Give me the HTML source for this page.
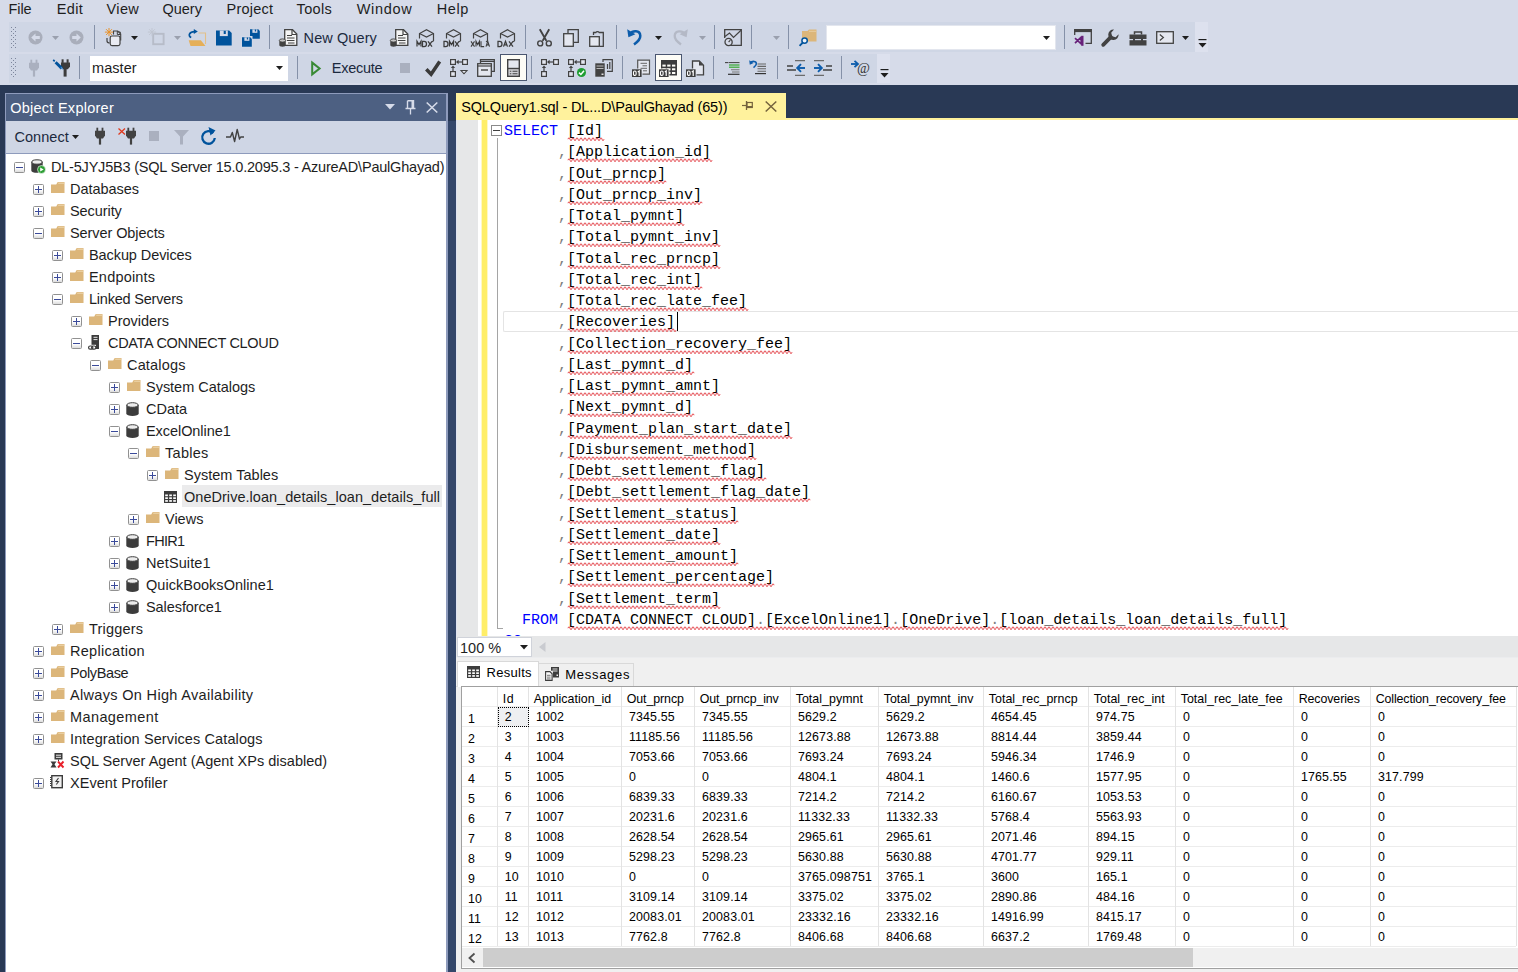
<!DOCTYPE html><html><head><meta charset="utf-8"><title>SSMS</title><style>
*{box-sizing:border-box;margin:0;padding:0}
html,body{width:1518px;height:972px;overflow:hidden}
body{background:#293955;font-family:"Liberation Sans",sans-serif;position:relative;color:#000}
.abs{position:absolute}
.t{position:absolute;white-space:pre;line-height:1}
#top{position:absolute;left:0;top:0;width:1518px;height:85px;background:#d6dbe9}
.menu{font-size:14.5px;color:#1e1e1e;top:2px}
svg{position:absolute;overflow:visible}
.tb{position:absolute;background:#cfd6e5}
.sep{position:absolute;width:1px;background:#8591a8}
#oe{position:absolute;left:5px;top:93px;width:443px;height:879px;background:#fff}
#oet{position:absolute;left:0;top:0;width:443px;height:28px;background:#4d6082}
#oetb{position:absolute;left:0;top:28px;width:443px;height:32px;background:#cfd6e5}
.tr{font-size:14.5px;color:#1e1e1e}
#ed{position:absolute;left:456px;top:120px;width:1062px;height:516px;background:#fff;overflow:hidden}
.code{font-family:"Liberation Mono",monospace;font-size:15px;color:#000;line-height:1}
.kw{color:#0000ff}
.gr{color:#808080}
#res{position:absolute;left:456px;top:636px;width:1062px;height:336px;background:#f0f0f0}
.g{font-size:12.4px;color:#000}
.hl{position:absolute;height:1px;background:#ececec}
.vl{position:absolute;width:1px;background:#e3e3e3}
</style></head><body>
<div id="top">
<span class="t menu" style="left:8.5px;letter-spacing:-0.079px">File</span>
<span class="t menu" style="left:56.7px;letter-spacing:0.371px">Edit</span>
<span class="t menu" style="left:106.5px;letter-spacing:0.379px">View</span>
<span class="t menu" style="left:162.39999999999998px;letter-spacing:0.022px">Query</span>
<span class="t menu" style="left:226.5px;letter-spacing:0.225px">Project</span>
<span class="t menu" style="left:296.59999999999997px;letter-spacing:0.342px">Tools</span>
<span class="t menu" style="left:356.7px;letter-spacing:0.677px">Window</span>
<span class="t menu" style="left:436.8px;letter-spacing:0.592px">Help</span>
<div class="tb" style="left:9px;top:22px;width:1186px;height:30px"></div>
<div class="tb" style="left:1195px;top:22px;width:13px;height:30px;background:#dde1ee"></div>
<div class="tb" style="left:9px;top:54px;width:868px;height:29px"></div>
<div class="tb" style="left:877px;top:54px;width:13px;height:29px;background:#dde1ee"></div>
<svg style="left:11px;top:27px" width="6" height="22" viewBox="0 0 6 22" ><rect x="0" y="0" width="1" height="1" fill="#7d869c"/><rect x="4" y="0" width="1" height="1" fill="#7d869c"/><rect x="2" y="2" width="1" height="1" fill="#7d869c"/><rect x="0" y="4" width="1" height="1" fill="#7d869c"/><rect x="4" y="4" width="1" height="1" fill="#7d869c"/><rect x="2" y="6" width="1" height="1" fill="#7d869c"/><rect x="0" y="8" width="1" height="1" fill="#7d869c"/><rect x="4" y="8" width="1" height="1" fill="#7d869c"/><rect x="2" y="10" width="1" height="1" fill="#7d869c"/><rect x="0" y="12" width="1" height="1" fill="#7d869c"/><rect x="4" y="12" width="1" height="1" fill="#7d869c"/><rect x="2" y="14" width="1" height="1" fill="#7d869c"/><rect x="0" y="16" width="1" height="1" fill="#7d869c"/><rect x="4" y="16" width="1" height="1" fill="#7d869c"/><rect x="2" y="18" width="1" height="1" fill="#7d869c"/><rect x="0" y="20" width="1" height="1" fill="#7d869c"/><rect x="4" y="20" width="1" height="1" fill="#7d869c"/></svg>
<svg style="left:11px;top:58px" width="6" height="20" viewBox="0 0 6 20" ><rect x="0" y="0" width="1" height="1" fill="#7d869c"/><rect x="4" y="0" width="1" height="1" fill="#7d869c"/><rect x="2" y="2" width="1" height="1" fill="#7d869c"/><rect x="0" y="4" width="1" height="1" fill="#7d869c"/><rect x="4" y="4" width="1" height="1" fill="#7d869c"/><rect x="2" y="6" width="1" height="1" fill="#7d869c"/><rect x="0" y="8" width="1" height="1" fill="#7d869c"/><rect x="4" y="8" width="1" height="1" fill="#7d869c"/><rect x="2" y="10" width="1" height="1" fill="#7d869c"/><rect x="0" y="12" width="1" height="1" fill="#7d869c"/><rect x="4" y="12" width="1" height="1" fill="#7d869c"/><rect x="2" y="14" width="1" height="1" fill="#7d869c"/><rect x="0" y="16" width="1" height="1" fill="#7d869c"/><rect x="4" y="16" width="1" height="1" fill="#7d869c"/><rect x="2" y="18" width="1" height="1" fill="#7d869c"/></svg>
<svg style="left:28px;top:30px" width="15" height="15" viewBox="0 0 15 15" ><circle cx="7.5" cy="7.5" r="7" fill="#a9aebb"/><path d="M3.2 7.5L7.5 3.4v2.6h4.3v3H7.5v2.6z" fill="#d6dbe9"/></svg>
<svg style="left:52px;top:36px" width="7" height="5" viewBox="0 0 7 5" ><path d="M0 0h7l-3.5 4z" fill="#9aa0ae"/></svg>
<svg style="left:69px;top:30px" width="15" height="15" viewBox="0 0 15 15" ><circle cx="7.5" cy="7.5" r="7" fill="#a9aebb"/><path d="M11.8 7.5L7.5 3.4v2.6H3.2v3h4.3v2.6z" fill="#d6dbe9"/></svg>
<div class="sep" style="left:94px;top:25px;height:24px"></div>
<svg style="left:105px;top:28px" width="17" height="19" viewBox="0 0 17 19" ><path d="M8.500 6.500V3h4.200l3 3v6.500" fill="none" stroke="#424242" stroke-width="1.100"/><path d="M12.300 3v3.500h3.400" fill="none" stroke="#424242" stroke-width="1"/><path d="M12.800 2.800l3 3V4z" fill="#424242"/><rect x="5.200" y="8" width="9.800" height="9.600" rx="1.800" fill="#e9ebf2" stroke="#424242" stroke-width="1.200"/><path d="M2 10v2.800a2 2 0 0 0 2 2h0.500" fill="none" stroke="#424242" stroke-width="1.200"/><g stroke="#e8922a" stroke-width="1"><path d="M4 0v8.200M-0.100 4.100h8.200M1.100 1.200l5.800 5.800M6.900 1.200L1.100 7"/></g></svg>
<svg style="left:131px;top:36px" width="7" height="5" viewBox="0 0 7 5" ><path d="M0 0h7l-3.5 4z" fill="#1e1e1e"/></svg>
<svg style="left:148px;top:28px" width="18" height="19" viewBox="0 0 18 19" ><rect x="5.200" y="5.800" width="10.400" height="10.400" fill="none" stroke="#b7bcc8" stroke-width="1.900"/><g stroke="#c0c5d0" stroke-width="0.900"><path d="M4 0v8.200M-0.100 4.100h8.200M1.100 1.200l5.800 5.800M6.900 1.200L1.100 7"/></g></svg>
<svg style="left:174px;top:36px" width="7" height="5" viewBox="0 0 7 5" ><path d="M0 0h7l-3.5 4z" fill="#9aa0ae"/></svg>
<svg style="left:188px;top:29px" width="19" height="18" viewBox="0 0 19 18" ><path d="M10.500 4h7v11" fill="none" stroke="#e2c089" stroke-width="1.100"/><path d="M0.700 11.200h12.100l4.700 5.800h-15z" fill="#e5af58"/><path d="M3.200 8.600C-0.500 6.800 1.500 2.600 6.500 2.600" fill="none" stroke="#00539c" stroke-width="1.700"/><path d="M5.800 0L9.800 2.500 5.800 5.100z" fill="#00539c"/></svg>
<svg style="left:216px;top:30px" width="16" height="16" viewBox="0 0 16 16" ><g transform="scale(1.0)"><path d="M0 0.500h13.200L15.700 3v12.500H0z" fill="#00539c"/><rect x="3.800" y="0.500" width="8" height="5.600" fill="#d3d9e8"/><rect x="7.700" y="0.800" width="2.100" height="3.200" fill="#00539c"/></g></svg>
<svg style="left:250px;top:29px" width="10" height="10" viewBox="0 0 10 10" ><g transform="scale(0.625)"><path d="M0 0.500h13.200L15.700 3v12.500H0z" fill="#00539c"/><rect x="3.800" y="0.500" width="8" height="5.600" fill="#d3d9e8"/><rect x="7.700" y="0.800" width="2.100" height="3.200" fill="#00539c"/></g></svg><svg style="left:241px;top:35.8px" width="11.5" height="11.5" viewBox="0 0 11.5 11.5" ><rect width="11.500" height="11.500" fill="#d3d9e8"/></svg><svg style="left:242px;top:36.8px" width="10" height="10" viewBox="0 0 10 10" ><g transform="scale(0.625)"><path d="M0 0.500h13.200L15.700 3v12.500H0z" fill="#00539c"/><rect x="3.800" y="0.500" width="8" height="5.600" fill="#d3d9e8"/><rect x="7.700" y="0.800" width="2.100" height="3.200" fill="#00539c"/></g></svg>
<div class="sep" style="left:269px;top:25px;height:24px"></div>
<svg style="left:279px;top:29px" width="19" height="18" viewBox="0 0 19 18" ><path d="M5.7 0.7h7.8l4.3 4.3v11.3H5.7z" fill="#f5f5f5" stroke="#424242" stroke-width="1.3"/><path d="M13 0.7v4.8h4.8" fill="none" stroke="#424242" stroke-width="1.2"/><path d="M8 6.5h5M8 9h7.5M8 11.5h7.5M9 14h6.5" stroke="#424242" stroke-width="1.2"/><path d="M0.3 11.5h6.4v4.6a3.2 1.7 0 0 1-6.4 0z" fill="#424242"/><ellipse cx="3.5" cy="11.5" rx="3.2" ry="1.6" fill="#c8c8c8" stroke="#424242" stroke-width="0.9"/></svg>
<span class="t" style="left:303.6px;top:31px;font-size:14.5px;color:#1b293e;letter-spacing:0.09px">New Query</span>
<svg style="left:390px;top:29px" width="19" height="18" viewBox="0 0 19 18" ><path d="M5.7 0.7h7.8l4.3 4.3v11.3H5.7z" fill="#f5f5f5" stroke="#424242" stroke-width="1.3"/><path d="M13 0.7v4.8h4.8" fill="none" stroke="#424242" stroke-width="1.2"/><path d="M8 6.5h5M8 9h7.5M8 11.5h7.5M9 14h6.5" stroke="#424242" stroke-width="1.2"/><path d="M0.3 11.5h6.4v4.6a3.2 1.7 0 0 1-6.4 0z" fill="#424242"/><ellipse cx="3.5" cy="11.5" rx="3.2" ry="1.6" fill="#c8c8c8" stroke="#424242" stroke-width="0.9"/></svg>
<svg style="left:417px;top:29px" width="19" height="18" viewBox="0 0 19 18" ><path d="M2.500 9.500v-5L9.500 0.800l7 3.700v7.500" fill="none" stroke="#424242" stroke-width="1.200"/><path d="M2.500 4.500l7 3.600 7-3.600" fill="none" stroke="#424242" stroke-width="1.200"/><path d="M16.500 12l-1.500 0.800" stroke="#424242" stroke-width="1.200"/><path transform="translate(0.00 12.300) scale(1.0 1)" d="M0 5.300V0L2 3.200 4 0V5.300" fill="none" stroke="#3c3c3c" stroke-width="1.250" stroke-linejoin="miter"/><path transform="translate(5.50 12.300) scale(1.0 1)" d="M0 0V5.300H1.600Q4 5.300 4 2.650Q4 0 1.600 0Z" fill="none" stroke="#3c3c3c" stroke-width="1.250" stroke-linejoin="miter"/><path transform="translate(11.00 12.300) scale(1.0 1)" d="M0 0L4 5.300M4 0L0 5.300" fill="none" stroke="#3c3c3c" stroke-width="1.250" stroke-linejoin="miter"/></svg>
<svg style="left:444px;top:29px" width="19" height="18" viewBox="0 0 19 18" ><path d="M2.500 9.500v-5L9.500 0.800l7 3.700v7.500" fill="none" stroke="#424242" stroke-width="1.200"/><path d="M2.500 4.500l7 3.600 7-3.600" fill="none" stroke="#424242" stroke-width="1.200"/><path d="M16.500 12l-1.500 0.800" stroke="#424242" stroke-width="1.200"/><path transform="translate(0.00 12.300) scale(1.0 1)" d="M0 0V5.300H1.600Q4 5.300 4 2.650Q4 0 1.600 0Z" fill="none" stroke="#3c3c3c" stroke-width="1.250" stroke-linejoin="miter"/><path transform="translate(5.50 12.300) scale(1.0 1)" d="M0 5.300V0L2 3.200 4 0V5.300" fill="none" stroke="#3c3c3c" stroke-width="1.250" stroke-linejoin="miter"/><path transform="translate(11.00 12.300) scale(1.0 1)" d="M0 0L4 5.300M4 0L0 5.300" fill="none" stroke="#3c3c3c" stroke-width="1.250" stroke-linejoin="miter"/></svg>
<svg style="left:471px;top:29px" width="19" height="18" viewBox="0 0 19 18" ><path d="M2.500 9.500v-5L9.500 0.800l7 3.700v7.500" fill="none" stroke="#424242" stroke-width="1.200"/><path d="M2.500 4.500l7 3.600 7-3.600" fill="none" stroke="#424242" stroke-width="1.200"/><path d="M16.500 12l-1.500 0.800" stroke="#424242" stroke-width="1.200"/><path transform="translate(0.00 12.300) scale(0.875 1)" d="M0 0L4 5.300M4 0L0 5.300" fill="none" stroke="#3c3c3c" stroke-width="1.250" stroke-linejoin="miter"/><path transform="translate(5.00 12.300) scale(0.875 1)" d="M0 5.300V0L2 3.200 4 0V5.300" fill="none" stroke="#3c3c3c" stroke-width="1.250" stroke-linejoin="miter"/><path transform="translate(10.00 12.300) scale(0.875 1)" d="M0 0V5.300H3.600" fill="none" stroke="#3c3c3c" stroke-width="1.250" stroke-linejoin="miter"/><path transform="translate(15.00 12.300) scale(0.875 1)" d="M0 5.300L2 0 4 5.300M0.800 3.600H3.200" fill="none" stroke="#3c3c3c" stroke-width="1.250" stroke-linejoin="miter"/></svg>
<svg style="left:498px;top:29px" width="19" height="18" viewBox="0 0 19 18" ><path d="M2.500 9.500v-5L9.500 0.800l7 3.700v7.500" fill="none" stroke="#424242" stroke-width="1.200"/><path d="M2.500 4.500l7 3.600 7-3.600" fill="none" stroke="#424242" stroke-width="1.200"/><path d="M16.500 12l-1.500 0.800" stroke="#424242" stroke-width="1.200"/><path transform="translate(0.00 12.300) scale(1.0 1)" d="M0 0V5.300H1.600Q4 5.300 4 2.650Q4 0 1.600 0Z" fill="none" stroke="#3c3c3c" stroke-width="1.250" stroke-linejoin="miter"/><path transform="translate(5.50 12.300) scale(1.0 1)" d="M0 5.300L2 0 4 5.300M0.800 3.600H3.200" fill="none" stroke="#3c3c3c" stroke-width="1.250" stroke-linejoin="miter"/><path transform="translate(11.00 12.300) scale(1.0 1)" d="M0 0L4 5.300M4 0L0 5.300" fill="none" stroke="#3c3c3c" stroke-width="1.250" stroke-linejoin="miter"/></svg>
<div class="sep" style="left:525px;top:25px;height:24px"></div>
<svg style="left:537px;top:29px" width="15" height="18" viewBox="0 0 15 18" ><path d="M2.800 0.300l6.600 11.600M12.200 0.300L5.600 11.900" stroke="#424242" stroke-width="1.900" fill="none"/><circle cx="3.200" cy="14.400" r="2.500" fill="none" stroke="#424242" stroke-width="1.400"/><circle cx="11.800" cy="14.400" r="2.500" fill="none" stroke="#424242" stroke-width="1.400"/></svg>
<svg style="left:563px;top:29px" width="16" height="18" viewBox="0 0 16 18" ><path d="M5 4V0.7h10.3v12.6H11" fill="none" stroke="#424242" stroke-width="1.3"/><rect x="0.7" y="4.7" width="9.6" height="12.6" fill="#e4e7ef" stroke="#424242" stroke-width="1.3"/></svg>
<svg style="left:589px;top:29px" width="16" height="18" viewBox="0 0 16 18" ><path d="M4.5 6V3.5h2.3a2 2 0 0 1 3.4 0h4.1v13.8H11" fill="none" stroke="#424242" stroke-width="1.3"/><rect x="0.7" y="7.7" width="9.6" height="9.6" fill="#e4e7ef" stroke="#424242" stroke-width="1.3"/></svg>
<div class="sep" style="left:616px;top:25px;height:24px"></div>
<svg style="left:627px;top:28px" width="16" height="18" viewBox="0 0 16 18" ><path d="M3 6.200C5.500 2.200 13 2 13.300 7.800c0.200 3.200-2.500 6-6.300 8.700" fill="none" stroke="#0c5cab" stroke-width="2.500"/><path d="M0.200 1.200l1.200 8 7-3z" fill="#0c5cab"/></svg>
<svg style="left:655px;top:36px" width="7" height="5" viewBox="0 0 7 5" ><path d="M0 0h7l-3.5 4z" fill="#1e1e1e"/></svg>
<svg style="left:672px;top:28px" width="16" height="18" viewBox="0 0 16 18" ><g transform="translate(16 0) scale(-1 1)"><path d="M3 6.200C5.500 2.200 13 2 13.300 7.800c0.200 3.200-2.500 6-6.300 8.700" fill="none" stroke="#b4b9c6" stroke-width="2.300"/><path d="M0.200 1.200l1.200 8 7-3z" fill="#b4b9c6"/></g></svg>
<svg style="left:699px;top:36px" width="7" height="5" viewBox="0 0 7 5" ><path d="M0 0h7l-3.5 4z" fill="#9aa0ae"/></svg>
<div class="sep" style="left:714px;top:25px;height:24px"></div>
<svg style="left:724px;top:29px" width="18" height="18" viewBox="0 0 18 18" ><path d="M4 16.3H17.3V0.7H0.7V9" fill="none" stroke="#424242" stroke-width="1.3"/><path d="M1 7.5L5.5 4 9.5 8.5 17 1.2" fill="none" stroke="#424242" stroke-width="1.2"/><circle cx="4.6" cy="13" r="3.6" fill="#d6dbe9" stroke="#424242" stroke-width="1.3"/><path d="M4.6 13l1.8-1.8" stroke="#424242" stroke-width="1.1"/></svg>
<div class="sep" style="left:751px;top:25px;height:24px"></div>
<svg style="left:773px;top:36px" width="7" height="5" viewBox="0 0 7 5" ><path d="M0 0h7l-3.5 4z" fill="#9aa0ae"/></svg>
<div class="sep" style="left:788px;top:25px;height:24px"></div>
<svg style="left:799px;top:29px" width="18" height="18" viewBox="0 0 18 18" ><path d="M3 2h5.5l1.5-1.5h7.5v12H3z" fill="#dcb67a"/><path d="M10 2.3h7" stroke="#e9cfa2" stroke-width="1"/><circle cx="5.6" cy="11.6" r="2.7" fill="#eef1f7" stroke="#00539c" stroke-width="1.5"/><path d="M3.7 13.6L0.6 16.8" stroke="#00539c" stroke-width="1.9"/></svg>
<div class="abs" style="left:826px;top:25px;width:230px;height:25px;background:#fff;border:1px solid #e3e6ee"></div>
<svg style="left:1043px;top:36px" width="7" height="5" viewBox="0 0 7 5" ><path d="M0 0h7l-3.5 4z" fill="#1e1e1e"/></svg>
<div class="sep" style="left:1064px;top:25px;height:24px"></div>
<svg style="left:1074px;top:29px" width="18" height="18" viewBox="0 0 18 18" ><path d="M0.700 6V0.700h16.600v13.600H11.500" fill="none" stroke="#424242" stroke-width="1.300"/><rect x="0.300" y="0.300" width="17.400" height="2.800" fill="#424242"/><path d="M1 9.200L7.200 15V8.200L1 14.200" fill="none" stroke="#68217a" stroke-width="1.700" stroke-linejoin="round"/><rect x="7.200" y="6.800" width="2.300" height="10" fill="#68217a"/></svg>
<svg style="left:1101px;top:29px" width="18" height="18" viewBox="0 0 18 18" ><path d="M2.200 15.800L9.800 8.200" stroke="#424242" stroke-width="3.800" stroke-linecap="round"/><path d="M13 0.600a5.200 5.200 0 1 0 4.600 4.600l-3 3-3.400-1-1-3.400z" fill="#424242"/></svg>
<svg style="left:1129px;top:30px" width="18" height="16" viewBox="0 0 18 16" ><path d="M5.5 4.5V2h7v2.5" fill="none" stroke="#424242" stroke-width="1.5"/><rect x="0.5" y="4.5" width="17" height="4.5" fill="#424242"/><rect x="0.5" y="10.2" width="17" height="5.3" fill="#424242"/><rect x="4" y="8.2" width="2" height="3.6" fill="#424242"/><rect x="12" y="8.2" width="2" height="3.6" fill="#424242"/></svg>
<svg style="left:1156px;top:31px" width="18" height="13" viewBox="0 0 18 13" ><rect x="0.7" y="0.7" width="16.6" height="11.6" fill="#e4e7ef" stroke="#424242" stroke-width="1.3"/><path d="M3.8 3.5l3.6 3-3.6 3" fill="none" stroke="#424242" stroke-width="1.2"/></svg>
<svg style="left:1182px;top:36px" width="7" height="5" viewBox="0 0 7 5" ><path d="M0 0h7l-3.5 4z" fill="#1e1e1e"/></svg>
<svg style="left:1198px;top:39px" width="9" height="9" viewBox="0 0 9 9" ><rect x="0.5" y="0" width="8" height="1.2" fill="#1e1e1e"/><path d="M0.5 4h8l-4 4.5z" fill="#1e1e1e"/></svg>
<svg style="left:29px;top:59px" width="10" height="18" viewBox="0 0 10 18" ><rect x="1.400" y="0.700" width="1.800" height="3.600" fill="#aab0bf"/><rect x="6.600" y="0.700" width="1.800" height="3.600" fill="#aab0bf"/><path d="M0 3.800h10v4.600l-2 3.200h-6l-2-3.200z" fill="#aab0bf"/><rect x="3.900" y="11" width="2.200" height="6.600" fill="#aab0bf"/></svg>
<svg style="left:61px;top:59px" width="9" height="18" viewBox="0 0 9 18" ><rect x="0.600" y="0.300" width="2" height="3.600" fill="#3c3c3c"/><rect x="5.600" y="0.300" width="2" height="3.600" fill="#3c3c3c"/><path d="M0 3.500h9v4.200l-2.200 2.600h-4.600l-2.200-2.600z" fill="#3c3c3c"/><rect x="2.600" y="9.500" width="3" height="8.100" fill="#3c3c3c"/></svg><svg style="left:53px;top:59px" width="12" height="12" viewBox="0 0 12 12" ><path d="M0.200 0.800l1.500 1.500" stroke="#00539c" stroke-width="1.700"/><path d="M2.600 3.200l6.200 6.200" stroke="#00539c" stroke-width="2.900"/><path d="M8.600 7.800l2.200 3.400-3.400-2.200z" fill="#4a90d0"/></svg>
<div class="sep" style="left:79px;top:56px;height:23px"></div>
<div class="abs" style="left:90px;top:56px;width:198px;height:25px;background:#fff"></div>
<span class="t" style="left:92px;top:61px;font-size:14.5px;color:#1e1e1e;letter-spacing:0.068px">master</span>
<svg style="left:276px;top:66px" width="7" height="5" viewBox="0 0 7 5" ><path d="M0 0h7l-3.5 4z" fill="#1e1e1e"/></svg>
<div class="sep" style="left:297px;top:56px;height:23px"></div>
<svg style="left:311px;top:61px" width="10" height="15" viewBox="0 0 10 15" ><path d="M1.2 1.6L8.6 7.5 1.2 13.4z" fill="none" stroke="#388a34" stroke-width="2"/></svg>
<span class="t" style="left:331.8px;top:61.3px;font-size:14.5px;color:#1b293e;letter-spacing:-0.278px">Execute</span>
<svg style="left:400px;top:63px" width="10" height="10" viewBox="0 0 10 10" ><rect width="10" height="10" fill="#aab0bf"/></svg>
<svg style="left:425px;top:60px" width="16" height="16" viewBox="0 0 16 16" ><path d="M1.300 9.200l4.800 5L14.700 1.400" fill="none" stroke="#3a3a3a" stroke-width="3.500"/></svg>
<svg style="left:450px;top:59px" width="18" height="18" viewBox="0 0 18 18" ><rect x="0.6" y="0.6" width="4.8" height="4.8" fill="#e4e7ef" stroke="#424242" stroke-width="1.2"/><rect x="12.6" y="0.6" width="4.8" height="4.8" fill="#e4e7ef" stroke="#424242" stroke-width="1.2"/><rect x="0.6" y="12.600" width="4.8" height="4.8" fill="#e4e7ef" stroke="#424242" stroke-width="1.2"/><path d="M12 3H7" stroke="#424242" stroke-width="1.2"/><path d="M6 3l2.6-2.2v4.4z" fill="#424242"/><path d="M3 12V8" stroke="#424242" stroke-width="1.2"/><path d="M3 6.5l2.200 2.600h-4.400z" fill="#424242"/><path d="M11 11.500h6l-3 3.300z" fill="#e4e7ef" stroke="#424242" stroke-width="1.1"/></svg>
<svg style="left:477px;top:59px" width="18" height="18" viewBox="0 0 18 18" ><path d="M3.500 4V0.700h13.800v11.600H14" fill="none" stroke="#424242" stroke-width="1.300"/><path d="M3.500 2.400h13.800" stroke="#424242" stroke-width="1.200"/><rect x="0.700" y="4.700" width="13.600" height="12.600" fill="#e4e7ef" stroke="#424242" stroke-width="1.300"/><path d="M0.700 7h13.600" stroke="#424242" stroke-width="1.200"/><path d="M4 11h7" stroke="#424242" stroke-width="1.400"/></svg>
<div class="abs" style="left:500px;top:54px;width:27px;height:27px;background:#fdfcf6;border:1px solid #4a5670"></div>
<svg style="left:507px;top:59px" width="13" height="18" viewBox="0 0 13 18" ><rect x="0.700" y="0.700" width="11.600" height="16.600" fill="#e4e7ef" stroke="#424242" stroke-width="1.400"/><rect x="0.700" y="9.500" width="11.600" height="7.800" fill="#d0d0d4" stroke="#424242" stroke-width="1.400"/><path d="M2.800 12.300h1.500M5.500 12.300h5M2.800 14.800h1.500M5.500 14.800h5" stroke="#424242" stroke-width="1.100"/></svg>
<div class="sep" style="left:531px;top:56px;height:23px"></div>
<svg style="left:541px;top:59px" width="18" height="18" viewBox="0 0 18 18" ><rect x="0.6" y="0.6" width="4.8" height="4.8" fill="#e4e7ef" stroke="#424242" stroke-width="1.2"/><rect x="12.6" y="0.6" width="4.8" height="4.8" fill="#e4e7ef" stroke="#424242" stroke-width="1.2"/><rect x="0.6" y="12.600" width="4.8" height="4.8" fill="#e4e7ef" stroke="#424242" stroke-width="1.2"/><path d="M12 3H7" stroke="#424242" stroke-width="1.2"/><path d="M6 3l2.6-2.2v4.4z" fill="#424242"/><path d="M3 12V8" stroke="#424242" stroke-width="1.2"/><path d="M3 6.5l2.200 2.600h-4.400z" fill="#424242"/></svg>
<svg style="left:568px;top:59px" width="18" height="18" viewBox="0 0 18 18" ><rect x="0.6" y="0.6" width="4.8" height="4.8" fill="#e4e7ef" stroke="#424242" stroke-width="1.2"/><rect x="12.6" y="0.6" width="4.8" height="4.8" fill="#e4e7ef" stroke="#424242" stroke-width="1.2"/><rect x="0.6" y="12.600" width="4.8" height="4.8" fill="#e4e7ef" stroke="#424242" stroke-width="1.2"/><path d="M12 3H7" stroke="#424242" stroke-width="1.2"/><path d="M6 3l2.6-2.2v4.4z" fill="#424242"/><path d="M3 12V8" stroke="#424242" stroke-width="1.2"/><path d="M3 6.5l2.200 2.600h-4.400z" fill="#424242"/><circle cx="13.500" cy="13.500" r="4.500" fill="#1e9e31"/><path d="M11 13.600l1.900 1.900 3.100-3.700" fill="none" stroke="#fff" stroke-width="1.500"/></svg>
<svg style="left:595px;top:59px" width="18" height="18" viewBox="0 0 18 18" ><path d="M8 3V0.700h9.300v11.600H12" fill="none" stroke="#424242" stroke-width="1.200"/><path d="M12.500 10V5M14.800 10V3" stroke="#424242" stroke-width="1.200"/><rect x="0.300" y="4.300" width="9.400" height="13.400" fill="#424242"/><path d="M1.500 7h7M1.500 9.500h7" stroke="#b9b9b9" stroke-width="1"/><rect x="6.500" y="14.500" width="2" height="1.500" fill="#ddd"/></svg>
<div class="sep" style="left:622px;top:56px;height:23px"></div>
<svg style="left:632px;top:59px" width="19" height="18" viewBox="0 0 19 18" ><path d="M5.700 9.500V1.200h11.800v14H10.500" fill="#e4e7ef" stroke="#555" stroke-width="1.200"/><path d="M8.500 4.300h6.500M10.500 6.800h4.500M8.500 9.300h6.500M11 11.800h4" stroke="#666" stroke-width="1"/><rect x="0" y="10.300" width="9.600" height="7.700" fill="#3c3c3c"/><rect x="1.500" y="12" width="2.600" height="4.400" rx="1.200" fill="none" stroke="#fff" stroke-width="1.100"/><path d="M5.800 13l1.400-1v4.900" fill="none" stroke="#fff" stroke-width="1.200"/></svg>
<div class="abs" style="left:655px;top:54px;width:27px;height:27px;background:#fdfcf6;border:1px solid #4a5670"></div>
<svg style="left:659px;top:59px" width="19" height="18" viewBox="0 0 19 18" ><rect x="2" y="1" width="16" height="15.500" fill="#3c3c3c"/><rect x="3.4" y="5.6" width="3.300" height="2" fill="#fdfcf6"/><rect x="8.2" y="5.6" width="3.300" height="2" fill="#fdfcf6"/><rect x="13.0" y="5.6" width="3.300" height="2" fill="#fdfcf6"/><rect x="3.4" y="9.3" width="3.300" height="2" fill="#fdfcf6"/><rect x="8.2" y="9.3" width="3.300" height="2" fill="#fdfcf6"/><rect x="13.0" y="9.3" width="3.300" height="2" fill="#fdfcf6"/><rect x="3.4" y="13.0" width="3.300" height="2" fill="#fdfcf6"/><rect x="8.2" y="13.0" width="3.300" height="2" fill="#fdfcf6"/><rect x="13.0" y="13.0" width="3.300" height="2" fill="#fdfcf6"/><rect x="-0.800" y="9.500" width="11.200" height="9.200" fill="#fdfcf6"/><rect x="0" y="10.300" width="9.600" height="7.700" fill="#3c3c3c"/><rect x="1.500" y="12" width="2.600" height="4.400" rx="1.200" fill="none" stroke="#fff" stroke-width="1.100"/><path d="M5.800 13l1.400-1v4.900" fill="none" stroke="#fff" stroke-width="1.200"/></svg>
<svg style="left:686px;top:59px" width="19" height="18" viewBox="0 0 19 18" ><path d="M6.500 9.500V2h6.800l4.200 4.200v9.600H10.500" fill="#e4e7ef" stroke="#424242" stroke-width="1.300"/><path d="M13 2.300v4.200h4.200z" fill="#424242"/><rect x="0" y="10.300" width="9.600" height="7.700" fill="#3c3c3c"/><rect x="1.500" y="12" width="2.600" height="4.400" rx="1.200" fill="none" stroke="#fff" stroke-width="1.100"/><path d="M5.800 13l1.400-1v4.900" fill="none" stroke="#fff" stroke-width="1.200"/></svg>
<div class="sep" style="left:713px;top:56px;height:23px"></div>
<svg style="left:725px;top:61.5px" width="15" height="13" viewBox="0 0 15 13" ><path d="M0 0.600h3.500" stroke="#424242" stroke-width="1.100"/><path d="M4 0.600h10.500" stroke="#424242" stroke-width="1"/><path d="M4 3h10.500M4 5.300h10.500" stroke="#55b155" stroke-width="1.500"/><path d="M6 7.800h8.500M7 10h7.500" stroke="#777" stroke-width="1.100"/><path d="M3 12.300h11.500" stroke="#333" stroke-width="1.200"/></svg>
<svg style="left:749px;top:60px" width="17" height="15" viewBox="0 0 17 15" ><path d="M1.500 3.300C2.800 0.600 7.600 0.800 7.300 4 7.100 5.600 5.800 6.300 4.500 7.600" fill="none" stroke="#0c5cab" stroke-width="1.600"/><path d="M0.200 0.300l0.600 4.500 3.800-1.700z" fill="#0c5cab"/><path d="M8.500 4h8.500M8.500 6.400h8.500M8.500 8.800h8.500M8.500 11.200h8.500" stroke="#666" stroke-width="1.100"/><path d="M6 13.600h11" stroke="#333" stroke-width="1.200"/></svg>
<div class="sep" style="left:777px;top:56px;height:23px"></div>
<svg style="left:787px;top:60px" width="19" height="16" viewBox="0 0 19 16" ><path d="M8 0.700h10M8 15.300h10" stroke="#6b6b6b" stroke-width="1.200"/><path d="M0 6h6M0 10h9" stroke="#424242" stroke-width="1.700"/><path d="M10 8h8" stroke="#0c5cab" stroke-width="1.900"/><path d="M14 4.200L10.200 8l3.800 3.800" fill="none" stroke="#0c5cab" stroke-width="1.900"/></svg>
<svg style="left:813px;top:60px" width="19" height="16" viewBox="0 0 19 16" ><path d="M1 0.700h10M1 15.300h10" stroke="#6b6b6b" stroke-width="1.200"/><path d="M13 6h6M10 10h9" stroke="#424242" stroke-width="1.700"/><path d="M1 8h8" stroke="#0c5cab" stroke-width="1.900"/><path d="M5 4.200L8.800 8 5 11.800" fill="none" stroke="#0c5cab" stroke-width="1.900"/></svg>
<div class="sep" style="left:841px;top:56px;height:23px"></div>
<svg style="left:851px;top:60px" width="19" height="16" viewBox="0 0 19 16" ><path d="M0 4h6" stroke="#0c5cab" stroke-width="1.800"/><path d="M3.500 0.800L7 4 3.500 7.200" fill="none" stroke="#0c5cab" stroke-width="1.800"/><text x="6" y="12.800" font-family="Liberation Serif" font-size="14" fill="#333">@</text></svg>
<svg style="left:880px;top:69px" width="9" height="9" viewBox="0 0 9 9" ><rect x="0.5" y="0" width="8" height="1.2" fill="#1e1e1e"/><path d="M0.5 4h8l-4 4.5z" fill="#1e1e1e"/></svg>
</div>
<div id="oe">
<div id="oet"><span class="t" style="left:5.2px;top:7.9px;font-size:14.5px;color:#fff;letter-spacing:0.259px">Object Explorer</span><svg style="left:380px;top:11px" width="10" height="6" viewBox="0 0 10 6" ><path d="M0 0h10l-5 5.500z" fill="#d6dbe9"/></svg><svg style="left:400px;top:7px" width="11" height="15" viewBox="0 0 11 15" ><path d="M2.500 0.700h6v7.500M2.500 0.700v7.500" fill="none" stroke="#d6dbe9" stroke-width="1.400"/><rect x="6.500" y="0.700" width="2" height="7.500" fill="#d6dbe9"/><path d="M0.500 8.500h10" stroke="#d6dbe9" stroke-width="1.500"/><path d="M5.500 9v5.500" stroke="#d6dbe9" stroke-width="1.300"/></svg><svg style="left:421px;top:9px" width="12" height="11" viewBox="0 0 12 11" ><path d="M0.700 0.500l10.600 10M11.300 0.500L0.700 10.500" stroke="#d6dbe9" stroke-width="1.600"/></svg></div>
<div id="oetb"><span class="t" style="left:9.5px;top:9.3px;font-size:14.5px;color:#1b293e;letter-spacing:0.044px">Connect</span><svg style="left:67px;top:14px" width="7" height="5" viewBox="0 0 7 5" ><path d="M0 0h7l-3.5 4z" fill="#1e1e1e"/></svg><svg style="left:90px;top:6px" width="10" height="18" viewBox="0 0 10 18" ><rect x="1.400" y="0.700" width="1.800" height="3.600" fill="#424242"/><rect x="6.600" y="0.700" width="1.800" height="3.600" fill="#424242"/><path d="M0 3.800h10v4.600l-2 3.200h-6l-2-3.200z" fill="#424242"/><rect x="3.900" y="11" width="2.200" height="6.600" fill="#424242"/></svg><svg style="left:113px;top:7px" width="8" height="7" viewBox="0 0 8 7" ><path d="M0.500 0.500l6.500 6M7 0.500l-6.500 6" stroke="#e03a1e" stroke-width="1.300"/></svg><svg style="left:121px;top:6px" width="10" height="18" viewBox="0 0 10 18" ><rect x="1.400" y="0.700" width="1.800" height="3.600" fill="#424242"/><rect x="6.600" y="0.700" width="1.800" height="3.600" fill="#424242"/><path d="M0 3.800h10v4.600l-2 3.200h-6l-2-3.200z" fill="#424242"/><rect x="3.900" y="11" width="2.200" height="6.600" fill="#424242"/></svg><svg style="left:144px;top:10px" width="10" height="10" viewBox="0 0 10 10" ><rect width="10" height="10" fill="#aab0bf"/></svg><svg style="left:169px;top:9px" width="15" height="15" viewBox="0 0 15 15" ><path d="M0 0h15l-6 6.500v8h-3v-8z" fill="#aab0bf"/></svg><svg style="left:195px;top:6px" width="17" height="18" viewBox="0 0 17 18" ><path d="M13.200 6.200A6.300 6.300 0 1 0 14.800 11" fill="none" stroke="#00539c" stroke-width="2.300"/><path d="M8.500 0l7 3.500-5 5z" fill="#00539c"/></svg><svg style="left:221px;top:8px" width="18" height="14" viewBox="0 0 18 14" ><path d="M0 8h4.500l1.800-4.500 2.300 9 2.600-12 2.300 9.500 1.200-2H18" fill="none" stroke="#424242" stroke-width="1.400" stroke-linejoin="round"/></svg></div>
<div class="abs" style="left:0;top:60px;width:443px;height:1px;background:#8e9bbc"></div>
<div class="abs" style="left:0;top:0;width:443px;height:1px;background:#8e9bbc"></div>
<div class="abs" style="left:0;top:0;width:1px;height:879px;background:#8e9bbc"></div>
<div class="abs" style="left:441px;top:0;width:2px;height:879px;background:#8e9bbc"></div>
<div class="abs" style="left:9px;top:69px;width:11px;height:11px;border:1px solid #919191;border-radius:1.500px;background:linear-gradient(#fff 0,#fff 55%,#dcdcdc 100%)"></div><div class="abs" style="left:11px;top:74px;width:7px;height:1px;background:#3a4a9a"></div>
<svg style="left:26px;top:66px" width="15" height="15" viewBox="0 0 15 15" ><path d="M0.300 3h11.400v8.500a5.700 2.300 0 0 1-11.400 0z" fill="#3c3c3c"/><ellipse cx="6" cy="3" rx="5.200" ry="2.200" fill="#ececec" stroke="#3c3c3c" stroke-width="1"/><circle cx="10.500" cy="10.500" r="4" fill="#2e9e35" stroke="#fff" stroke-width="0.600"/><path d="M9.200 8.400v4.200l3.500-2.100z" fill="#fff"/></svg>
<span class="t tr" style="left:46px;top:66.5px;letter-spacing:-0.207px">DL-5JYJ5B3 (SQL Server 15.0.2095.3 - AzureAD\PaulGhayad)</span>
<div class="abs" style="left:28px;top:91px;width:11px;height:11px;border:1px solid #919191;border-radius:1.500px;background:linear-gradient(#fff 0,#fff 55%,#dcdcdc 100%)"></div><div class="abs" style="left:30px;top:96px;width:7px;height:1px;background:#3a4a9a"></div><div class="abs" style="left:33px;top:93px;width:1px;height:7px;background:#3a4a9a"></div>
<svg style="left:45.5px;top:89px" width="13.5" height="12" viewBox="0 0 13.5 12" ><path d="M0 2.500h5.200L6.700 0h6.800v11H0z" fill="#dcb67a"/><path d="M7.200 1.200h5.800" stroke="#efd9b0" stroke-width="1"/></svg>
<span class="t tr" style="left:65px;top:88.5px;letter-spacing:-0.027px">Databases</span>
<div class="abs" style="left:28px;top:113px;width:11px;height:11px;border:1px solid #919191;border-radius:1.500px;background:linear-gradient(#fff 0,#fff 55%,#dcdcdc 100%)"></div><div class="abs" style="left:30px;top:118px;width:7px;height:1px;background:#3a4a9a"></div><div class="abs" style="left:33px;top:115px;width:1px;height:7px;background:#3a4a9a"></div>
<svg style="left:45.5px;top:111px" width="13.5" height="12" viewBox="0 0 13.5 12" ><path d="M0 2.500h5.200L6.700 0h6.800v11H0z" fill="#dcb67a"/><path d="M7.200 1.200h5.800" stroke="#efd9b0" stroke-width="1"/></svg>
<span class="t tr" style="left:65px;top:110.5px;letter-spacing:-0.079px">Security</span>
<div class="abs" style="left:28px;top:135px;width:11px;height:11px;border:1px solid #919191;border-radius:1.500px;background:linear-gradient(#fff 0,#fff 55%,#dcdcdc 100%)"></div><div class="abs" style="left:30px;top:140px;width:7px;height:1px;background:#3a4a9a"></div>
<svg style="left:45.5px;top:133px" width="13.5" height="12" viewBox="0 0 13.5 12" ><path d="M0 2.500h5.200L6.700 0h6.800v11H0z" fill="#dcb67a"/><path d="M7.200 1.200h5.800" stroke="#efd9b0" stroke-width="1"/></svg>
<span class="t tr" style="left:65px;top:132.5px;letter-spacing:-0.082px">Server Objects</span>
<div class="abs" style="left:47px;top:157px;width:11px;height:11px;border:1px solid #919191;border-radius:1.500px;background:linear-gradient(#fff 0,#fff 55%,#dcdcdc 100%)"></div><div class="abs" style="left:49px;top:162px;width:7px;height:1px;background:#3a4a9a"></div><div class="abs" style="left:52px;top:159px;width:1px;height:7px;background:#3a4a9a"></div>
<svg style="left:64.5px;top:155px" width="13.5" height="12" viewBox="0 0 13.5 12" ><path d="M0 2.500h5.200L6.700 0h6.800v11H0z" fill="#dcb67a"/><path d="M7.200 1.200h5.800" stroke="#efd9b0" stroke-width="1"/></svg>
<span class="t tr" style="left:84px;top:154.5px;letter-spacing:-0.087px">Backup Devices</span>
<div class="abs" style="left:47px;top:179px;width:11px;height:11px;border:1px solid #919191;border-radius:1.500px;background:linear-gradient(#fff 0,#fff 55%,#dcdcdc 100%)"></div><div class="abs" style="left:49px;top:184px;width:7px;height:1px;background:#3a4a9a"></div><div class="abs" style="left:52px;top:181px;width:1px;height:7px;background:#3a4a9a"></div>
<svg style="left:64.5px;top:177px" width="13.5" height="12" viewBox="0 0 13.5 12" ><path d="M0 2.500h5.200L6.700 0h6.800v11H0z" fill="#dcb67a"/><path d="M7.200 1.200h5.800" stroke="#efd9b0" stroke-width="1"/></svg>
<span class="t tr" style="left:84px;top:176.5px;letter-spacing:0.2px">Endpoints</span>
<div class="abs" style="left:47px;top:201px;width:11px;height:11px;border:1px solid #919191;border-radius:1.500px;background:linear-gradient(#fff 0,#fff 55%,#dcdcdc 100%)"></div><div class="abs" style="left:49px;top:206px;width:7px;height:1px;background:#3a4a9a"></div>
<svg style="left:64.5px;top:199px" width="13.5" height="12" viewBox="0 0 13.5 12" ><path d="M0 2.500h5.200L6.700 0h6.800v11H0z" fill="#dcb67a"/><path d="M7.200 1.200h5.800" stroke="#efd9b0" stroke-width="1"/></svg>
<span class="t tr" style="left:84px;top:198.5px;letter-spacing:-0.209px">Linked Servers</span>
<div class="abs" style="left:66px;top:223px;width:11px;height:11px;border:1px solid #919191;border-radius:1.500px;background:linear-gradient(#fff 0,#fff 55%,#dcdcdc 100%)"></div><div class="abs" style="left:68px;top:228px;width:7px;height:1px;background:#3a4a9a"></div><div class="abs" style="left:71px;top:225px;width:1px;height:7px;background:#3a4a9a"></div>
<svg style="left:83.5px;top:221px" width="13.5" height="12" viewBox="0 0 13.5 12" ><path d="M0 2.500h5.200L6.700 0h6.800v11H0z" fill="#dcb67a"/><path d="M7.200 1.200h5.800" stroke="#efd9b0" stroke-width="1"/></svg>
<span class="t tr" style="left:103px;top:220.5px;letter-spacing:-0.018px">Providers</span>
<div class="abs" style="left:66px;top:245px;width:11px;height:11px;border:1px solid #919191;border-radius:1.500px;background:linear-gradient(#fff 0,#fff 55%,#dcdcdc 100%)"></div><div class="abs" style="left:68px;top:250px;width:7px;height:1px;background:#3a4a9a"></div>
<svg style="left:83px;top:242px" width="12" height="15" viewBox="0 0 12 15" ><rect x="3.500" y="0" width="7.500" height="14" fill="#3c3c3c"/><path d="M5.500 2.300h4M5.500 4.600h4" stroke="#e8e8e8" stroke-width="1"/><rect x="2.500" y="9.800" width="5.500" height="5.200" fill="#fff"/><rect x="0.600" y="11" width="4.200" height="3.200" rx="1.500" fill="none" stroke="#3c3c3c" stroke-width="1.200"/><rect x="3.600" y="11" width="4.200" height="3.200" rx="1.500" fill="none" stroke="#3c3c3c" stroke-width="1.200"/></svg>
<span class="t tr" style="left:103px;top:242.5px;letter-spacing:-0.305px">CDATA CONNECT CLOUD</span>
<div class="abs" style="left:85px;top:267px;width:11px;height:11px;border:1px solid #919191;border-radius:1.500px;background:linear-gradient(#fff 0,#fff 55%,#dcdcdc 100%)"></div><div class="abs" style="left:87px;top:272px;width:7px;height:1px;background:#3a4a9a"></div>
<svg style="left:102.5px;top:265px" width="13.5" height="12" viewBox="0 0 13.5 12" ><path d="M0 2.500h5.200L6.700 0h6.800v11H0z" fill="#dcb67a"/><path d="M7.200 1.200h5.800" stroke="#efd9b0" stroke-width="1"/></svg>
<span class="t tr" style="left:122px;top:264.5px;letter-spacing:0.169px">Catalogs</span>
<div class="abs" style="left:104px;top:289px;width:11px;height:11px;border:1px solid #919191;border-radius:1.500px;background:linear-gradient(#fff 0,#fff 55%,#dcdcdc 100%)"></div><div class="abs" style="left:106px;top:294px;width:7px;height:1px;background:#3a4a9a"></div><div class="abs" style="left:109px;top:291px;width:1px;height:7px;background:#3a4a9a"></div>
<svg style="left:121.5px;top:287px" width="13.5" height="12" viewBox="0 0 13.5 12" ><path d="M0 2.500h5.200L6.700 0h6.800v11H0z" fill="#dcb67a"/><path d="M7.200 1.200h5.800" stroke="#efd9b0" stroke-width="1"/></svg>
<span class="t tr" style="left:141px;top:286.5px;letter-spacing:-0.021px">System Catalogs</span>
<div class="abs" style="left:104px;top:311px;width:11px;height:11px;border:1px solid #919191;border-radius:1.500px;background:linear-gradient(#fff 0,#fff 55%,#dcdcdc 100%)"></div><div class="abs" style="left:106px;top:316px;width:7px;height:1px;background:#3a4a9a"></div><div class="abs" style="left:109px;top:313px;width:1px;height:7px;background:#3a4a9a"></div>
<svg style="left:121px;top:309px" width="13" height="14" viewBox="0 0 13 14" ><path d="M0.300 3h12.400v8.500a6.200 2.500 0 0 1-12.400 0z" fill="#3c3c3c"/><ellipse cx="6.500" cy="3" rx="5.700" ry="2.300" fill="#ececec" stroke="#3c3c3c" stroke-width="1"/></svg>
<span class="t tr" style="left:141px;top:308.5px;letter-spacing:-0.024px">CData</span>
<div class="abs" style="left:104px;top:333px;width:11px;height:11px;border:1px solid #919191;border-radius:1.500px;background:linear-gradient(#fff 0,#fff 55%,#dcdcdc 100%)"></div><div class="abs" style="left:106px;top:338px;width:7px;height:1px;background:#3a4a9a"></div>
<svg style="left:121px;top:331px" width="13" height="14" viewBox="0 0 13 14" ><path d="M0.300 3h12.400v8.500a6.200 2.500 0 0 1-12.400 0z" fill="#3c3c3c"/><ellipse cx="6.500" cy="3" rx="5.700" ry="2.300" fill="#ececec" stroke="#3c3c3c" stroke-width="1"/></svg>
<span class="t tr" style="left:141px;top:330.5px;letter-spacing:-0.064px">ExcelOnline1</span>
<div class="abs" style="left:123px;top:355px;width:11px;height:11px;border:1px solid #919191;border-radius:1.500px;background:linear-gradient(#fff 0,#fff 55%,#dcdcdc 100%)"></div><div class="abs" style="left:125px;top:360px;width:7px;height:1px;background:#3a4a9a"></div>
<svg style="left:140.5px;top:353px" width="13.5" height="12" viewBox="0 0 13.5 12" ><path d="M0 2.500h5.200L6.700 0h6.800v11H0z" fill="#dcb67a"/><path d="M7.200 1.200h5.800" stroke="#efd9b0" stroke-width="1"/></svg>
<span class="t tr" style="left:160px;top:352.5px;letter-spacing:0.287px">Tables</span>
<div class="abs" style="left:142px;top:377px;width:11px;height:11px;border:1px solid #919191;border-radius:1.500px;background:linear-gradient(#fff 0,#fff 55%,#dcdcdc 100%)"></div><div class="abs" style="left:144px;top:382px;width:7px;height:1px;background:#3a4a9a"></div><div class="abs" style="left:147px;top:379px;width:1px;height:7px;background:#3a4a9a"></div>
<svg style="left:159.5px;top:375px" width="13.5" height="12" viewBox="0 0 13.5 12" ><path d="M0 2.500h5.200L6.700 0h6.800v11H0z" fill="#dcb67a"/><path d="M7.200 1.200h5.800" stroke="#efd9b0" stroke-width="1"/></svg>
<span class="t tr" style="left:179px;top:374.5px;letter-spacing:0.014px">System Tables</span>
<div class="abs" style="left:177px;top:392px;width:260px;height:22px;background:#ebebec"></div>
<svg style="left:159px;top:398px" width="13" height="12" viewBox="0 0 13 12" ><rect width="13" height="12" fill="#3c3c3c"/><rect x="1.2" y="3.5" width="2.700" height="1.700" fill="#fff"/><rect x="5.2" y="3.5" width="2.700" height="1.700" fill="#fff"/><rect x="9.2" y="3.5" width="2.700" height="1.700" fill="#fff"/><rect x="1.2" y="6.3" width="2.700" height="1.700" fill="#fff"/><rect x="5.2" y="6.3" width="2.700" height="1.700" fill="#fff"/><rect x="9.2" y="6.3" width="2.700" height="1.700" fill="#fff"/><rect x="1.2" y="9.1" width="2.700" height="1.700" fill="#fff"/><rect x="5.2" y="9.1" width="2.700" height="1.700" fill="#fff"/><rect x="9.2" y="9.1" width="2.700" height="1.700" fill="#fff"/></svg>
<span class="t tr" style="left:179px;top:396.5px;letter-spacing:0.033px">OneDrive.loan_details_loan_details_full</span>
<div class="abs" style="left:123px;top:421px;width:11px;height:11px;border:1px solid #919191;border-radius:1.500px;background:linear-gradient(#fff 0,#fff 55%,#dcdcdc 100%)"></div><div class="abs" style="left:125px;top:426px;width:7px;height:1px;background:#3a4a9a"></div><div class="abs" style="left:128px;top:423px;width:1px;height:7px;background:#3a4a9a"></div>
<svg style="left:140.5px;top:419px" width="13.5" height="12" viewBox="0 0 13.5 12" ><path d="M0 2.500h5.200L6.700 0h6.800v11H0z" fill="#dcb67a"/><path d="M7.200 1.200h5.800" stroke="#efd9b0" stroke-width="1"/></svg>
<span class="t tr" style="left:160px;top:418.5px;letter-spacing:-0.005px">Views</span>
<div class="abs" style="left:104px;top:443px;width:11px;height:11px;border:1px solid #919191;border-radius:1.500px;background:linear-gradient(#fff 0,#fff 55%,#dcdcdc 100%)"></div><div class="abs" style="left:106px;top:448px;width:7px;height:1px;background:#3a4a9a"></div><div class="abs" style="left:109px;top:445px;width:1px;height:7px;background:#3a4a9a"></div>
<svg style="left:121px;top:441px" width="13" height="14" viewBox="0 0 13 14" ><path d="M0.300 3h12.400v8.500a6.200 2.500 0 0 1-12.400 0z" fill="#3c3c3c"/><ellipse cx="6.500" cy="3" rx="5.700" ry="2.300" fill="#ececec" stroke="#3c3c3c" stroke-width="1"/></svg>
<span class="t tr" style="left:141px;top:440.5px;letter-spacing:-0.69px">FHIR1</span>
<div class="abs" style="left:104px;top:465px;width:11px;height:11px;border:1px solid #919191;border-radius:1.500px;background:linear-gradient(#fff 0,#fff 55%,#dcdcdc 100%)"></div><div class="abs" style="left:106px;top:470px;width:7px;height:1px;background:#3a4a9a"></div><div class="abs" style="left:109px;top:467px;width:1px;height:7px;background:#3a4a9a"></div>
<svg style="left:121px;top:463px" width="13" height="14" viewBox="0 0 13 14" ><path d="M0.300 3h12.400v8.500a6.200 2.500 0 0 1-12.400 0z" fill="#3c3c3c"/><ellipse cx="6.500" cy="3" rx="5.700" ry="2.300" fill="#ececec" stroke="#3c3c3c" stroke-width="1"/></svg>
<span class="t tr" style="left:141px;top:462.5px;letter-spacing:0.107px">NetSuite1</span>
<div class="abs" style="left:104px;top:487px;width:11px;height:11px;border:1px solid #919191;border-radius:1.500px;background:linear-gradient(#fff 0,#fff 55%,#dcdcdc 100%)"></div><div class="abs" style="left:106px;top:492px;width:7px;height:1px;background:#3a4a9a"></div><div class="abs" style="left:109px;top:489px;width:1px;height:7px;background:#3a4a9a"></div>
<svg style="left:121px;top:485px" width="13" height="14" viewBox="0 0 13 14" ><path d="M0.300 3h12.400v8.500a6.200 2.500 0 0 1-12.400 0z" fill="#3c3c3c"/><ellipse cx="6.500" cy="3" rx="5.700" ry="2.300" fill="#ececec" stroke="#3c3c3c" stroke-width="1"/></svg>
<span class="t tr" style="left:141px;top:484.5px;letter-spacing:0.028px">QuickBooksOnline1</span>
<div class="abs" style="left:104px;top:509px;width:11px;height:11px;border:1px solid #919191;border-radius:1.500px;background:linear-gradient(#fff 0,#fff 55%,#dcdcdc 100%)"></div><div class="abs" style="left:106px;top:514px;width:7px;height:1px;background:#3a4a9a"></div><div class="abs" style="left:109px;top:511px;width:1px;height:7px;background:#3a4a9a"></div>
<svg style="left:121px;top:507px" width="13" height="14" viewBox="0 0 13 14" ><path d="M0.300 3h12.400v8.500a6.200 2.500 0 0 1-12.400 0z" fill="#3c3c3c"/><ellipse cx="6.500" cy="3" rx="5.700" ry="2.300" fill="#ececec" stroke="#3c3c3c" stroke-width="1"/></svg>
<span class="t tr" style="left:141px;top:506.5px;letter-spacing:-0.074px">Salesforce1</span>
<div class="abs" style="left:47px;top:531px;width:11px;height:11px;border:1px solid #919191;border-radius:1.500px;background:linear-gradient(#fff 0,#fff 55%,#dcdcdc 100%)"></div><div class="abs" style="left:49px;top:536px;width:7px;height:1px;background:#3a4a9a"></div><div class="abs" style="left:52px;top:533px;width:1px;height:7px;background:#3a4a9a"></div>
<svg style="left:64.5px;top:529px" width="13.5" height="12" viewBox="0 0 13.5 12" ><path d="M0 2.500h5.200L6.700 0h6.800v11H0z" fill="#dcb67a"/><path d="M7.200 1.200h5.800" stroke="#efd9b0" stroke-width="1"/></svg>
<span class="t tr" style="left:84px;top:528.5px;letter-spacing:0.195px">Triggers</span>
<div class="abs" style="left:28px;top:553px;width:11px;height:11px;border:1px solid #919191;border-radius:1.500px;background:linear-gradient(#fff 0,#fff 55%,#dcdcdc 100%)"></div><div class="abs" style="left:30px;top:558px;width:7px;height:1px;background:#3a4a9a"></div><div class="abs" style="left:33px;top:555px;width:1px;height:7px;background:#3a4a9a"></div>
<svg style="left:45.5px;top:551px" width="13.5" height="12" viewBox="0 0 13.5 12" ><path d="M0 2.500h5.200L6.700 0h6.800v11H0z" fill="#dcb67a"/><path d="M7.200 1.200h5.800" stroke="#efd9b0" stroke-width="1"/></svg>
<span class="t tr" style="left:65px;top:550.5px;letter-spacing:0.29px">Replication</span>
<div class="abs" style="left:28px;top:575px;width:11px;height:11px;border:1px solid #919191;border-radius:1.500px;background:linear-gradient(#fff 0,#fff 55%,#dcdcdc 100%)"></div><div class="abs" style="left:30px;top:580px;width:7px;height:1px;background:#3a4a9a"></div><div class="abs" style="left:33px;top:577px;width:1px;height:7px;background:#3a4a9a"></div>
<svg style="left:45.5px;top:573px" width="13.5" height="12" viewBox="0 0 13.5 12" ><path d="M0 2.500h5.200L6.700 0h6.800v11H0z" fill="#dcb67a"/><path d="M7.200 1.200h5.800" stroke="#efd9b0" stroke-width="1"/></svg>
<span class="t tr" style="left:65px;top:572.5px;letter-spacing:-0.369px">PolyBase</span>
<div class="abs" style="left:28px;top:597px;width:11px;height:11px;border:1px solid #919191;border-radius:1.500px;background:linear-gradient(#fff 0,#fff 55%,#dcdcdc 100%)"></div><div class="abs" style="left:30px;top:602px;width:7px;height:1px;background:#3a4a9a"></div><div class="abs" style="left:33px;top:599px;width:1px;height:7px;background:#3a4a9a"></div>
<svg style="left:45.5px;top:595px" width="13.5" height="12" viewBox="0 0 13.5 12" ><path d="M0 2.500h5.200L6.700 0h6.800v11H0z" fill="#dcb67a"/><path d="M7.200 1.200h5.800" stroke="#efd9b0" stroke-width="1"/></svg>
<span class="t tr" style="left:65px;top:594.5px;letter-spacing:0.327px">Always On High Availability</span>
<div class="abs" style="left:28px;top:619px;width:11px;height:11px;border:1px solid #919191;border-radius:1.500px;background:linear-gradient(#fff 0,#fff 55%,#dcdcdc 100%)"></div><div class="abs" style="left:30px;top:624px;width:7px;height:1px;background:#3a4a9a"></div><div class="abs" style="left:33px;top:621px;width:1px;height:7px;background:#3a4a9a"></div>
<svg style="left:45.5px;top:617px" width="13.5" height="12" viewBox="0 0 13.5 12" ><path d="M0 2.500h5.200L6.700 0h6.800v11H0z" fill="#dcb67a"/><path d="M7.200 1.200h5.800" stroke="#efd9b0" stroke-width="1"/></svg>
<span class="t tr" style="left:65px;top:616.5px;letter-spacing:0.396px">Management</span>
<div class="abs" style="left:28px;top:641px;width:11px;height:11px;border:1px solid #919191;border-radius:1.500px;background:linear-gradient(#fff 0,#fff 55%,#dcdcdc 100%)"></div><div class="abs" style="left:30px;top:646px;width:7px;height:1px;background:#3a4a9a"></div><div class="abs" style="left:33px;top:643px;width:1px;height:7px;background:#3a4a9a"></div>
<svg style="left:45.5px;top:639px" width="13.5" height="12" viewBox="0 0 13.5 12" ><path d="M0 2.500h5.200L6.700 0h6.800v11H0z" fill="#dcb67a"/><path d="M7.200 1.200h5.800" stroke="#efd9b0" stroke-width="1"/></svg>
<span class="t tr" style="left:65px;top:638.5px;letter-spacing:0.112px">Integration Services Catalogs</span>
<svg style="left:45px;top:660px" width="14" height="15" viewBox="0 0 14 15" ><rect x="4.500" y="0" width="8" height="6.500" fill="#3c3c3c"/><path d="M6 2.200h5M6 4.300h5" stroke="#f0f0f0" stroke-width="1"/><path d="M8.500 6.500v1.500" stroke="#3c3c3c" stroke-width="1"/><path d="M0.500 8.500h6L4.500 11.300 6.500 14.500h-6L2.500 11.300z" fill="#3c3c3c"/><path d="M8 8.500l5.500 6M13.500 8.500L8 14.500" stroke="#e8202a" stroke-width="1.900"/></svg>
<span class="t tr" style="left:65px;top:660.5px;letter-spacing:0.017px">SQL Server Agent (Agent XPs disabled)</span>
<div class="abs" style="left:28px;top:685px;width:11px;height:11px;border:1px solid #919191;border-radius:1.500px;background:linear-gradient(#fff 0,#fff 55%,#dcdcdc 100%)"></div><div class="abs" style="left:30px;top:690px;width:7px;height:1px;background:#3a4a9a"></div><div class="abs" style="left:33px;top:687px;width:1px;height:7px;background:#3a4a9a"></div>
<svg style="left:45px;top:682px" width="13" height="14" viewBox="0 0 13 14" ><rect x="1.800" y="0.700" width="10.500" height="12" fill="#f1f1f1" stroke="#3c3c3c" stroke-width="1.400"/><path d="M0 2.500h1.500M0 4.500h1.500M0 6.500h1.500M0 8.500h1.500M0 10.500h1.500" stroke="#3c3c3c" stroke-width="1"/><path d="M8.500 3L6 6.500h2.500L6.300 9.500" fill="none" stroke="#3c3c3c" stroke-width="1.100"/></svg>
<span class="t tr" style="left:65px;top:682.5px;letter-spacing:0.054px">XEvent Profiler</span>
</div>
<div class="abs" style="left:448px;top:121px;width:8px;height:851px;background:#34476a"></div>
<div class="abs" style="left:456px;top:93px;width:330px;height:27px;background:#fff29d"></div>
<div class="abs" style="left:456px;top:118px;width:1062px;height:2px;background:#fff29d"></div>
<span class="t" style="left:461.2px;top:99.5px;font-size:14.5px;letter-spacing:-0.137px">SQLQuery1.sql - DL...D\PaulGhayad (65))</span>
<svg style="left:742px;top:101px" width="11" height="9" viewBox="0 0 11 9" ><path d="M0 4.500h4" stroke="#75633d" stroke-width="1.200"/><path d="M4.500 0v9" stroke="#75633d" stroke-width="1.300"/><rect x="5" y="1.500" width="5.300" height="5" fill="none" stroke="#75633d" stroke-width="1.200"/><rect x="5" y="5" width="5.300" height="1.800" fill="#75633d"/></svg><svg style="left:765px;top:101px" width="12" height="11" viewBox="0 0 12 11" ><path d="M0.700 0.500l10.600 10M11.300 0.500L0.700 10.500" stroke="#75633d" stroke-width="1.500"/></svg>
<div id="ed">
<div class="abs" style="left:0;top:0;width:22px;height:516px;background:#e6e7e8"></div>
<div class="abs" style="left:0;top:0;width:1px;height:516px;background:#dfe3f0"></div>
<div class="abs" style="left:25px;top:0;width:7px;height:516px;background:#fff8c4"></div>
<div class="abs" style="left:26px;top:0;width:5px;height:516px;background:#ffee68"></div>
<div class="abs" style="left:41px;top:18px;width:1px;height:491px;background:#a5a5a5"></div>
<div class="abs" style="left:41px;top:508px;width:6px;height:1px;background:#a5a5a5"></div>
<div class="abs" style="left:35px;top:5px;width:11px;height:11px;background:#fff;border:1px solid #8a8a8a"></div>
<div class="abs" style="left:37px;top:10px;width:7px;height:1px;background:#404040"></div>
<div class="abs" style="left:47px;top:191px;width:1020px;height:21px;border:1px solid #e4e4e4;border-right:none;border-radius:2px 0 0 2px"></div>
<span class="t code" style="left:48px;top:4.00px"><span class="kw">SELECT</span> [Id]</span>
<svg style="left:111.5px;top:17.2px" width="36" height="5" viewBox="0 0 36 5"><path d="M0 2.2 Q1 -0.9 2 2.2 T4 2.2 T6 2.2 T8 2.2 T10 2.2 T12 2.2 T14 2.2 T16 2.2 T18 2.2 T20 2.2 T22 2.2 T24 2.2 T26 2.2 T28 2.2 T30 2.2 T32 2.2 T34 2.2 T36 2.2" fill="none" stroke="#e5484e" stroke-width="1"/></svg>
<span class="t code" style="left:102px;top:25.26px"><span class="gr">,</span>[Application_id]</span>
<svg style="left:111.5px;top:38.2px" width="144" height="5" viewBox="0 0 144 5"><path d="M0 2.2 Q1 -0.9 2 2.2 T4 2.2 T6 2.2 T8 2.2 T10 2.2 T12 2.2 T14 2.2 T16 2.2 T18 2.2 T20 2.2 T22 2.2 T24 2.2 T26 2.2 T28 2.2 T30 2.2 T32 2.2 T34 2.2 T36 2.2 T38 2.2 T40 2.2 T42 2.2 T44 2.2 T46 2.2 T48 2.2 T50 2.2 T52 2.2 T54 2.2 T56 2.2 T58 2.2 T60 2.2 T62 2.2 T64 2.2 T66 2.2 T68 2.2 T70 2.2 T72 2.2 T74 2.2 T76 2.2 T78 2.2 T80 2.2 T82 2.2 T84 2.2 T86 2.2 T88 2.2 T90 2.2 T92 2.2 T94 2.2 T96 2.2 T98 2.2 T100 2.2 T102 2.2 T104 2.2 T106 2.2 T108 2.2 T110 2.2 T112 2.2 T114 2.2 T116 2.2 T118 2.2 T120 2.2 T122 2.2 T124 2.2 T126 2.2 T128 2.2 T130 2.2 T132 2.2 T134 2.2 T136 2.2 T138 2.2 T140 2.2 T142 2.2 T144 2.2" fill="none" stroke="#e5484e" stroke-width="1"/></svg>
<span class="t code" style="left:102px;top:46.52px"><span class="gr">,</span>[Out_prncp]</span>
<svg style="left:111.5px;top:60.2px" width="99" height="5" viewBox="0 0 99 5"><path d="M0 2.2 Q1 -0.9 2 2.2 T4 2.2 T6 2.2 T8 2.2 T10 2.2 T12 2.2 T14 2.2 T16 2.2 T18 2.2 T20 2.2 T22 2.2 T24 2.2 T26 2.2 T28 2.2 T30 2.2 T32 2.2 T34 2.2 T36 2.2 T38 2.2 T40 2.2 T42 2.2 T44 2.2 T46 2.2 T48 2.2 T50 2.2 T52 2.2 T54 2.2 T56 2.2 T58 2.2 T60 2.2 T62 2.2 T64 2.2 T66 2.2 T68 2.2 T70 2.2 T72 2.2 T74 2.2 T76 2.2 T78 2.2 T80 2.2 T82 2.2 T84 2.2 T86 2.2 T88 2.2 T90 2.2 T92 2.2 T94 2.2 T96 2.2 T98 2.2" fill="none" stroke="#e5484e" stroke-width="1"/></svg>
<span class="t code" style="left:102px;top:67.78px"><span class="gr">,</span>[Out_prncp_inv]</span>
<svg style="left:111.5px;top:81.2px" width="135" height="5" viewBox="0 0 135 5"><path d="M0 2.2 Q1 -0.9 2 2.2 T4 2.2 T6 2.2 T8 2.2 T10 2.2 T12 2.2 T14 2.2 T16 2.2 T18 2.2 T20 2.2 T22 2.2 T24 2.2 T26 2.2 T28 2.2 T30 2.2 T32 2.2 T34 2.2 T36 2.2 T38 2.2 T40 2.2 T42 2.2 T44 2.2 T46 2.2 T48 2.2 T50 2.2 T52 2.2 T54 2.2 T56 2.2 T58 2.2 T60 2.2 T62 2.2 T64 2.2 T66 2.2 T68 2.2 T70 2.2 T72 2.2 T74 2.2 T76 2.2 T78 2.2 T80 2.2 T82 2.2 T84 2.2 T86 2.2 T88 2.2 T90 2.2 T92 2.2 T94 2.2 T96 2.2 T98 2.2 T100 2.2 T102 2.2 T104 2.2 T106 2.2 T108 2.2 T110 2.2 T112 2.2 T114 2.2 T116 2.2 T118 2.2 T120 2.2 T122 2.2 T124 2.2 T126 2.2 T128 2.2 T130 2.2 T132 2.2 T134 2.2" fill="none" stroke="#e5484e" stroke-width="1"/></svg>
<span class="t code" style="left:102px;top:89.04px"><span class="gr">,</span>[Total_pymnt]</span>
<svg style="left:111.5px;top:102.2px" width="117" height="5" viewBox="0 0 117 5"><path d="M0 2.2 Q1 -0.9 2 2.2 T4 2.2 T6 2.2 T8 2.2 T10 2.2 T12 2.2 T14 2.2 T16 2.2 T18 2.2 T20 2.2 T22 2.2 T24 2.2 T26 2.2 T28 2.2 T30 2.2 T32 2.2 T34 2.2 T36 2.2 T38 2.2 T40 2.2 T42 2.2 T44 2.2 T46 2.2 T48 2.2 T50 2.2 T52 2.2 T54 2.2 T56 2.2 T58 2.2 T60 2.2 T62 2.2 T64 2.2 T66 2.2 T68 2.2 T70 2.2 T72 2.2 T74 2.2 T76 2.2 T78 2.2 T80 2.2 T82 2.2 T84 2.2 T86 2.2 T88 2.2 T90 2.2 T92 2.2 T94 2.2 T96 2.2 T98 2.2 T100 2.2 T102 2.2 T104 2.2 T106 2.2 T108 2.2 T110 2.2 T112 2.2 T114 2.2 T116 2.2" fill="none" stroke="#e5484e" stroke-width="1"/></svg>
<span class="t code" style="left:102px;top:110.30px"><span class="gr">,</span>[Total_pymnt_inv]</span>
<svg style="left:111.5px;top:123.2px" width="153" height="5" viewBox="0 0 153 5"><path d="M0 2.2 Q1 -0.9 2 2.2 T4 2.2 T6 2.2 T8 2.2 T10 2.2 T12 2.2 T14 2.2 T16 2.2 T18 2.2 T20 2.2 T22 2.2 T24 2.2 T26 2.2 T28 2.2 T30 2.2 T32 2.2 T34 2.2 T36 2.2 T38 2.2 T40 2.2 T42 2.2 T44 2.2 T46 2.2 T48 2.2 T50 2.2 T52 2.2 T54 2.2 T56 2.2 T58 2.2 T60 2.2 T62 2.2 T64 2.2 T66 2.2 T68 2.2 T70 2.2 T72 2.2 T74 2.2 T76 2.2 T78 2.2 T80 2.2 T82 2.2 T84 2.2 T86 2.2 T88 2.2 T90 2.2 T92 2.2 T94 2.2 T96 2.2 T98 2.2 T100 2.2 T102 2.2 T104 2.2 T106 2.2 T108 2.2 T110 2.2 T112 2.2 T114 2.2 T116 2.2 T118 2.2 T120 2.2 T122 2.2 T124 2.2 T126 2.2 T128 2.2 T130 2.2 T132 2.2 T134 2.2 T136 2.2 T138 2.2 T140 2.2 T142 2.2 T144 2.2 T146 2.2 T148 2.2 T150 2.2 T152 2.2" fill="none" stroke="#e5484e" stroke-width="1"/></svg>
<span class="t code" style="left:102px;top:131.56px"><span class="gr">,</span>[Total_rec_prncp]</span>
<svg style="left:111.5px;top:145.2px" width="153" height="5" viewBox="0 0 153 5"><path d="M0 2.2 Q1 -0.9 2 2.2 T4 2.2 T6 2.2 T8 2.2 T10 2.2 T12 2.2 T14 2.2 T16 2.2 T18 2.2 T20 2.2 T22 2.2 T24 2.2 T26 2.2 T28 2.2 T30 2.2 T32 2.2 T34 2.2 T36 2.2 T38 2.2 T40 2.2 T42 2.2 T44 2.2 T46 2.2 T48 2.2 T50 2.2 T52 2.2 T54 2.2 T56 2.2 T58 2.2 T60 2.2 T62 2.2 T64 2.2 T66 2.2 T68 2.2 T70 2.2 T72 2.2 T74 2.2 T76 2.2 T78 2.2 T80 2.2 T82 2.2 T84 2.2 T86 2.2 T88 2.2 T90 2.2 T92 2.2 T94 2.2 T96 2.2 T98 2.2 T100 2.2 T102 2.2 T104 2.2 T106 2.2 T108 2.2 T110 2.2 T112 2.2 T114 2.2 T116 2.2 T118 2.2 T120 2.2 T122 2.2 T124 2.2 T126 2.2 T128 2.2 T130 2.2 T132 2.2 T134 2.2 T136 2.2 T138 2.2 T140 2.2 T142 2.2 T144 2.2 T146 2.2 T148 2.2 T150 2.2 T152 2.2" fill="none" stroke="#e5484e" stroke-width="1"/></svg>
<span class="t code" style="left:102px;top:152.82px"><span class="gr">,</span>[Total_rec_int]</span>
<svg style="left:111.5px;top:166.2px" width="135" height="5" viewBox="0 0 135 5"><path d="M0 2.2 Q1 -0.9 2 2.2 T4 2.2 T6 2.2 T8 2.2 T10 2.2 T12 2.2 T14 2.2 T16 2.2 T18 2.2 T20 2.2 T22 2.2 T24 2.2 T26 2.2 T28 2.2 T30 2.2 T32 2.2 T34 2.2 T36 2.2 T38 2.2 T40 2.2 T42 2.2 T44 2.2 T46 2.2 T48 2.2 T50 2.2 T52 2.2 T54 2.2 T56 2.2 T58 2.2 T60 2.2 T62 2.2 T64 2.2 T66 2.2 T68 2.2 T70 2.2 T72 2.2 T74 2.2 T76 2.2 T78 2.2 T80 2.2 T82 2.2 T84 2.2 T86 2.2 T88 2.2 T90 2.2 T92 2.2 T94 2.2 T96 2.2 T98 2.2 T100 2.2 T102 2.2 T104 2.2 T106 2.2 T108 2.2 T110 2.2 T112 2.2 T114 2.2 T116 2.2 T118 2.2 T120 2.2 T122 2.2 T124 2.2 T126 2.2 T128 2.2 T130 2.2 T132 2.2 T134 2.2" fill="none" stroke="#e5484e" stroke-width="1"/></svg>
<span class="t code" style="left:102px;top:174.08px"><span class="gr">,</span>[Total_rec_late_fee]</span>
<svg style="left:111.5px;top:187.2px" width="180" height="5" viewBox="0 0 180 5"><path d="M0 2.2 Q1 -0.9 2 2.2 T4 2.2 T6 2.2 T8 2.2 T10 2.2 T12 2.2 T14 2.2 T16 2.2 T18 2.2 T20 2.2 T22 2.2 T24 2.2 T26 2.2 T28 2.2 T30 2.2 T32 2.2 T34 2.2 T36 2.2 T38 2.2 T40 2.2 T42 2.2 T44 2.2 T46 2.2 T48 2.2 T50 2.2 T52 2.2 T54 2.2 T56 2.2 T58 2.2 T60 2.2 T62 2.2 T64 2.2 T66 2.2 T68 2.2 T70 2.2 T72 2.2 T74 2.2 T76 2.2 T78 2.2 T80 2.2 T82 2.2 T84 2.2 T86 2.2 T88 2.2 T90 2.2 T92 2.2 T94 2.2 T96 2.2 T98 2.2 T100 2.2 T102 2.2 T104 2.2 T106 2.2 T108 2.2 T110 2.2 T112 2.2 T114 2.2 T116 2.2 T118 2.2 T120 2.2 T122 2.2 T124 2.2 T126 2.2 T128 2.2 T130 2.2 T132 2.2 T134 2.2 T136 2.2 T138 2.2 T140 2.2 T142 2.2 T144 2.2 T146 2.2 T148 2.2 T150 2.2 T152 2.2 T154 2.2 T156 2.2 T158 2.2 T160 2.2 T162 2.2 T164 2.2 T166 2.2 T168 2.2 T170 2.2 T172 2.2 T174 2.2 T176 2.2 T178 2.2 T180 2.2" fill="none" stroke="#e5484e" stroke-width="1"/></svg>
<span class="t code" style="left:102px;top:195.34px"><span class="gr">,</span>[Recoveries]</span>
<svg style="left:111.5px;top:208.2px" width="108" height="5" viewBox="0 0 108 5"><path d="M0 2.2 Q1 -0.9 2 2.2 T4 2.2 T6 2.2 T8 2.2 T10 2.2 T12 2.2 T14 2.2 T16 2.2 T18 2.2 T20 2.2 T22 2.2 T24 2.2 T26 2.2 T28 2.2 T30 2.2 T32 2.2 T34 2.2 T36 2.2 T38 2.2 T40 2.2 T42 2.2 T44 2.2 T46 2.2 T48 2.2 T50 2.2 T52 2.2 T54 2.2 T56 2.2 T58 2.2 T60 2.2 T62 2.2 T64 2.2 T66 2.2 T68 2.2 T70 2.2 T72 2.2 T74 2.2 T76 2.2 T78 2.2 T80 2.2 T82 2.2 T84 2.2 T86 2.2 T88 2.2 T90 2.2 T92 2.2 T94 2.2 T96 2.2 T98 2.2 T100 2.2 T102 2.2 T104 2.2 T106 2.2 T108 2.2" fill="none" stroke="#e5484e" stroke-width="1"/></svg>
<span class="t code" style="left:102px;top:216.60px"><span class="gr">,</span>[Collection_recovery_fee]</span>
<svg style="left:111.5px;top:230.2px" width="225" height="5" viewBox="0 0 225 5"><path d="M0 2.2 Q1 -0.9 2 2.2 T4 2.2 T6 2.2 T8 2.2 T10 2.2 T12 2.2 T14 2.2 T16 2.2 T18 2.2 T20 2.2 T22 2.2 T24 2.2 T26 2.2 T28 2.2 T30 2.2 T32 2.2 T34 2.2 T36 2.2 T38 2.2 T40 2.2 T42 2.2 T44 2.2 T46 2.2 T48 2.2 T50 2.2 T52 2.2 T54 2.2 T56 2.2 T58 2.2 T60 2.2 T62 2.2 T64 2.2 T66 2.2 T68 2.2 T70 2.2 T72 2.2 T74 2.2 T76 2.2 T78 2.2 T80 2.2 T82 2.2 T84 2.2 T86 2.2 T88 2.2 T90 2.2 T92 2.2 T94 2.2 T96 2.2 T98 2.2 T100 2.2 T102 2.2 T104 2.2 T106 2.2 T108 2.2 T110 2.2 T112 2.2 T114 2.2 T116 2.2 T118 2.2 T120 2.2 T122 2.2 T124 2.2 T126 2.2 T128 2.2 T130 2.2 T132 2.2 T134 2.2 T136 2.2 T138 2.2 T140 2.2 T142 2.2 T144 2.2 T146 2.2 T148 2.2 T150 2.2 T152 2.2 T154 2.2 T156 2.2 T158 2.2 T160 2.2 T162 2.2 T164 2.2 T166 2.2 T168 2.2 T170 2.2 T172 2.2 T174 2.2 T176 2.2 T178 2.2 T180 2.2 T182 2.2 T184 2.2 T186 2.2 T188 2.2 T190 2.2 T192 2.2 T194 2.2 T196 2.2 T198 2.2 T200 2.2 T202 2.2 T204 2.2 T206 2.2 T208 2.2 T210 2.2 T212 2.2 T214 2.2 T216 2.2 T218 2.2 T220 2.2 T222 2.2 T224 2.2" fill="none" stroke="#e5484e" stroke-width="1"/></svg>
<span class="t code" style="left:102px;top:237.86px"><span class="gr">,</span>[Last_pymnt_d]</span>
<svg style="left:111.5px;top:251.2px" width="126" height="5" viewBox="0 0 126 5"><path d="M0 2.2 Q1 -0.9 2 2.2 T4 2.2 T6 2.2 T8 2.2 T10 2.2 T12 2.2 T14 2.2 T16 2.2 T18 2.2 T20 2.2 T22 2.2 T24 2.2 T26 2.2 T28 2.2 T30 2.2 T32 2.2 T34 2.2 T36 2.2 T38 2.2 T40 2.2 T42 2.2 T44 2.2 T46 2.2 T48 2.2 T50 2.2 T52 2.2 T54 2.2 T56 2.2 T58 2.2 T60 2.2 T62 2.2 T64 2.2 T66 2.2 T68 2.2 T70 2.2 T72 2.2 T74 2.2 T76 2.2 T78 2.2 T80 2.2 T82 2.2 T84 2.2 T86 2.2 T88 2.2 T90 2.2 T92 2.2 T94 2.2 T96 2.2 T98 2.2 T100 2.2 T102 2.2 T104 2.2 T106 2.2 T108 2.2 T110 2.2 T112 2.2 T114 2.2 T116 2.2 T118 2.2 T120 2.2 T122 2.2 T124 2.2 T126 2.2" fill="none" stroke="#e5484e" stroke-width="1"/></svg>
<span class="t code" style="left:102px;top:259.12px"><span class="gr">,</span>[Last_pymnt_amnt]</span>
<svg style="left:111.5px;top:272.2px" width="153" height="5" viewBox="0 0 153 5"><path d="M0 2.2 Q1 -0.9 2 2.2 T4 2.2 T6 2.2 T8 2.2 T10 2.2 T12 2.2 T14 2.2 T16 2.2 T18 2.2 T20 2.2 T22 2.2 T24 2.2 T26 2.2 T28 2.2 T30 2.2 T32 2.2 T34 2.2 T36 2.2 T38 2.2 T40 2.2 T42 2.2 T44 2.2 T46 2.2 T48 2.2 T50 2.2 T52 2.2 T54 2.2 T56 2.2 T58 2.2 T60 2.2 T62 2.2 T64 2.2 T66 2.2 T68 2.2 T70 2.2 T72 2.2 T74 2.2 T76 2.2 T78 2.2 T80 2.2 T82 2.2 T84 2.2 T86 2.2 T88 2.2 T90 2.2 T92 2.2 T94 2.2 T96 2.2 T98 2.2 T100 2.2 T102 2.2 T104 2.2 T106 2.2 T108 2.2 T110 2.2 T112 2.2 T114 2.2 T116 2.2 T118 2.2 T120 2.2 T122 2.2 T124 2.2 T126 2.2 T128 2.2 T130 2.2 T132 2.2 T134 2.2 T136 2.2 T138 2.2 T140 2.2 T142 2.2 T144 2.2 T146 2.2 T148 2.2 T150 2.2 T152 2.2" fill="none" stroke="#e5484e" stroke-width="1"/></svg>
<span class="t code" style="left:102px;top:280.38px"><span class="gr">,</span>[Next_pymnt_d]</span>
<svg style="left:111.5px;top:293.2px" width="126" height="5" viewBox="0 0 126 5"><path d="M0 2.2 Q1 -0.9 2 2.2 T4 2.2 T6 2.2 T8 2.2 T10 2.2 T12 2.2 T14 2.2 T16 2.2 T18 2.2 T20 2.2 T22 2.2 T24 2.2 T26 2.2 T28 2.2 T30 2.2 T32 2.2 T34 2.2 T36 2.2 T38 2.2 T40 2.2 T42 2.2 T44 2.2 T46 2.2 T48 2.2 T50 2.2 T52 2.2 T54 2.2 T56 2.2 T58 2.2 T60 2.2 T62 2.2 T64 2.2 T66 2.2 T68 2.2 T70 2.2 T72 2.2 T74 2.2 T76 2.2 T78 2.2 T80 2.2 T82 2.2 T84 2.2 T86 2.2 T88 2.2 T90 2.2 T92 2.2 T94 2.2 T96 2.2 T98 2.2 T100 2.2 T102 2.2 T104 2.2 T106 2.2 T108 2.2 T110 2.2 T112 2.2 T114 2.2 T116 2.2 T118 2.2 T120 2.2 T122 2.2 T124 2.2 T126 2.2" fill="none" stroke="#e5484e" stroke-width="1"/></svg>
<span class="t code" style="left:102px;top:301.64px"><span class="gr">,</span>[Payment_plan_start_date]</span>
<svg style="left:111.5px;top:315.2px" width="225" height="5" viewBox="0 0 225 5"><path d="M0 2.2 Q1 -0.9 2 2.2 T4 2.2 T6 2.2 T8 2.2 T10 2.2 T12 2.2 T14 2.2 T16 2.2 T18 2.2 T20 2.2 T22 2.2 T24 2.2 T26 2.2 T28 2.2 T30 2.2 T32 2.2 T34 2.2 T36 2.2 T38 2.2 T40 2.2 T42 2.2 T44 2.2 T46 2.2 T48 2.2 T50 2.2 T52 2.2 T54 2.2 T56 2.2 T58 2.2 T60 2.2 T62 2.2 T64 2.2 T66 2.2 T68 2.2 T70 2.2 T72 2.2 T74 2.2 T76 2.2 T78 2.2 T80 2.2 T82 2.2 T84 2.2 T86 2.2 T88 2.2 T90 2.2 T92 2.2 T94 2.2 T96 2.2 T98 2.2 T100 2.2 T102 2.2 T104 2.2 T106 2.2 T108 2.2 T110 2.2 T112 2.2 T114 2.2 T116 2.2 T118 2.2 T120 2.2 T122 2.2 T124 2.2 T126 2.2 T128 2.2 T130 2.2 T132 2.2 T134 2.2 T136 2.2 T138 2.2 T140 2.2 T142 2.2 T144 2.2 T146 2.2 T148 2.2 T150 2.2 T152 2.2 T154 2.2 T156 2.2 T158 2.2 T160 2.2 T162 2.2 T164 2.2 T166 2.2 T168 2.2 T170 2.2 T172 2.2 T174 2.2 T176 2.2 T178 2.2 T180 2.2 T182 2.2 T184 2.2 T186 2.2 T188 2.2 T190 2.2 T192 2.2 T194 2.2 T196 2.2 T198 2.2 T200 2.2 T202 2.2 T204 2.2 T206 2.2 T208 2.2 T210 2.2 T212 2.2 T214 2.2 T216 2.2 T218 2.2 T220 2.2 T222 2.2 T224 2.2" fill="none" stroke="#e5484e" stroke-width="1"/></svg>
<span class="t code" style="left:102px;top:322.90px"><span class="gr">,</span>[Disbursement_method]</span>
<svg style="left:111.5px;top:336.2px" width="189" height="5" viewBox="0 0 189 5"><path d="M0 2.2 Q1 -0.9 2 2.2 T4 2.2 T6 2.2 T8 2.2 T10 2.2 T12 2.2 T14 2.2 T16 2.2 T18 2.2 T20 2.2 T22 2.2 T24 2.2 T26 2.2 T28 2.2 T30 2.2 T32 2.2 T34 2.2 T36 2.2 T38 2.2 T40 2.2 T42 2.2 T44 2.2 T46 2.2 T48 2.2 T50 2.2 T52 2.2 T54 2.2 T56 2.2 T58 2.2 T60 2.2 T62 2.2 T64 2.2 T66 2.2 T68 2.2 T70 2.2 T72 2.2 T74 2.2 T76 2.2 T78 2.2 T80 2.2 T82 2.2 T84 2.2 T86 2.2 T88 2.2 T90 2.2 T92 2.2 T94 2.2 T96 2.2 T98 2.2 T100 2.2 T102 2.2 T104 2.2 T106 2.2 T108 2.2 T110 2.2 T112 2.2 T114 2.2 T116 2.2 T118 2.2 T120 2.2 T122 2.2 T124 2.2 T126 2.2 T128 2.2 T130 2.2 T132 2.2 T134 2.2 T136 2.2 T138 2.2 T140 2.2 T142 2.2 T144 2.2 T146 2.2 T148 2.2 T150 2.2 T152 2.2 T154 2.2 T156 2.2 T158 2.2 T160 2.2 T162 2.2 T164 2.2 T166 2.2 T168 2.2 T170 2.2 T172 2.2 T174 2.2 T176 2.2 T178 2.2 T180 2.2 T182 2.2 T184 2.2 T186 2.2 T188 2.2" fill="none" stroke="#e5484e" stroke-width="1"/></svg>
<span class="t code" style="left:102px;top:344.16px"><span class="gr">,</span>[Debt_settlement_flag]</span>
<svg style="left:111.5px;top:357.2px" width="198" height="5" viewBox="0 0 198 5"><path d="M0 2.2 Q1 -0.9 2 2.2 T4 2.2 T6 2.2 T8 2.2 T10 2.2 T12 2.2 T14 2.2 T16 2.2 T18 2.2 T20 2.2 T22 2.2 T24 2.2 T26 2.2 T28 2.2 T30 2.2 T32 2.2 T34 2.2 T36 2.2 T38 2.2 T40 2.2 T42 2.2 T44 2.2 T46 2.2 T48 2.2 T50 2.2 T52 2.2 T54 2.2 T56 2.2 T58 2.2 T60 2.2 T62 2.2 T64 2.2 T66 2.2 T68 2.2 T70 2.2 T72 2.2 T74 2.2 T76 2.2 T78 2.2 T80 2.2 T82 2.2 T84 2.2 T86 2.2 T88 2.2 T90 2.2 T92 2.2 T94 2.2 T96 2.2 T98 2.2 T100 2.2 T102 2.2 T104 2.2 T106 2.2 T108 2.2 T110 2.2 T112 2.2 T114 2.2 T116 2.2 T118 2.2 T120 2.2 T122 2.2 T124 2.2 T126 2.2 T128 2.2 T130 2.2 T132 2.2 T134 2.2 T136 2.2 T138 2.2 T140 2.2 T142 2.2 T144 2.2 T146 2.2 T148 2.2 T150 2.2 T152 2.2 T154 2.2 T156 2.2 T158 2.2 T160 2.2 T162 2.2 T164 2.2 T166 2.2 T168 2.2 T170 2.2 T172 2.2 T174 2.2 T176 2.2 T178 2.2 T180 2.2 T182 2.2 T184 2.2 T186 2.2 T188 2.2 T190 2.2 T192 2.2 T194 2.2 T196 2.2 T198 2.2" fill="none" stroke="#e5484e" stroke-width="1"/></svg>
<span class="t code" style="left:102px;top:365.42px"><span class="gr">,</span>[Debt_settlement_flag_date]</span>
<svg style="left:111.5px;top:378.2px" width="243" height="5" viewBox="0 0 243 5"><path d="M0 2.2 Q1 -0.9 2 2.2 T4 2.2 T6 2.2 T8 2.2 T10 2.2 T12 2.2 T14 2.2 T16 2.2 T18 2.2 T20 2.2 T22 2.2 T24 2.2 T26 2.2 T28 2.2 T30 2.2 T32 2.2 T34 2.2 T36 2.2 T38 2.2 T40 2.2 T42 2.2 T44 2.2 T46 2.2 T48 2.2 T50 2.2 T52 2.2 T54 2.2 T56 2.2 T58 2.2 T60 2.2 T62 2.2 T64 2.2 T66 2.2 T68 2.2 T70 2.2 T72 2.2 T74 2.2 T76 2.2 T78 2.2 T80 2.2 T82 2.2 T84 2.2 T86 2.2 T88 2.2 T90 2.2 T92 2.2 T94 2.2 T96 2.2 T98 2.2 T100 2.2 T102 2.2 T104 2.2 T106 2.2 T108 2.2 T110 2.2 T112 2.2 T114 2.2 T116 2.2 T118 2.2 T120 2.2 T122 2.2 T124 2.2 T126 2.2 T128 2.2 T130 2.2 T132 2.2 T134 2.2 T136 2.2 T138 2.2 T140 2.2 T142 2.2 T144 2.2 T146 2.2 T148 2.2 T150 2.2 T152 2.2 T154 2.2 T156 2.2 T158 2.2 T160 2.2 T162 2.2 T164 2.2 T166 2.2 T168 2.2 T170 2.2 T172 2.2 T174 2.2 T176 2.2 T178 2.2 T180 2.2 T182 2.2 T184 2.2 T186 2.2 T188 2.2 T190 2.2 T192 2.2 T194 2.2 T196 2.2 T198 2.2 T200 2.2 T202 2.2 T204 2.2 T206 2.2 T208 2.2 T210 2.2 T212 2.2 T214 2.2 T216 2.2 T218 2.2 T220 2.2 T222 2.2 T224 2.2 T226 2.2 T228 2.2 T230 2.2 T232 2.2 T234 2.2 T236 2.2 T238 2.2 T240 2.2 T242 2.2" fill="none" stroke="#e5484e" stroke-width="1"/></svg>
<span class="t code" style="left:102px;top:386.68px"><span class="gr">,</span>[Settlement_status]</span>
<svg style="left:111.5px;top:400.2px" width="171" height="5" viewBox="0 0 171 5"><path d="M0 2.2 Q1 -0.9 2 2.2 T4 2.2 T6 2.2 T8 2.2 T10 2.2 T12 2.2 T14 2.2 T16 2.2 T18 2.2 T20 2.2 T22 2.2 T24 2.2 T26 2.2 T28 2.2 T30 2.2 T32 2.2 T34 2.2 T36 2.2 T38 2.2 T40 2.2 T42 2.2 T44 2.2 T46 2.2 T48 2.2 T50 2.2 T52 2.2 T54 2.2 T56 2.2 T58 2.2 T60 2.2 T62 2.2 T64 2.2 T66 2.2 T68 2.2 T70 2.2 T72 2.2 T74 2.2 T76 2.2 T78 2.2 T80 2.2 T82 2.2 T84 2.2 T86 2.2 T88 2.2 T90 2.2 T92 2.2 T94 2.2 T96 2.2 T98 2.2 T100 2.2 T102 2.2 T104 2.2 T106 2.2 T108 2.2 T110 2.2 T112 2.2 T114 2.2 T116 2.2 T118 2.2 T120 2.2 T122 2.2 T124 2.2 T126 2.2 T128 2.2 T130 2.2 T132 2.2 T134 2.2 T136 2.2 T138 2.2 T140 2.2 T142 2.2 T144 2.2 T146 2.2 T148 2.2 T150 2.2 T152 2.2 T154 2.2 T156 2.2 T158 2.2 T160 2.2 T162 2.2 T164 2.2 T166 2.2 T168 2.2 T170 2.2" fill="none" stroke="#e5484e" stroke-width="1"/></svg>
<span class="t code" style="left:102px;top:407.94px"><span class="gr">,</span>[Settlement_date]</span>
<svg style="left:111.5px;top:421.2px" width="153" height="5" viewBox="0 0 153 5"><path d="M0 2.2 Q1 -0.9 2 2.2 T4 2.2 T6 2.2 T8 2.2 T10 2.2 T12 2.2 T14 2.2 T16 2.2 T18 2.2 T20 2.2 T22 2.2 T24 2.2 T26 2.2 T28 2.2 T30 2.2 T32 2.2 T34 2.2 T36 2.2 T38 2.2 T40 2.2 T42 2.2 T44 2.2 T46 2.2 T48 2.2 T50 2.2 T52 2.2 T54 2.2 T56 2.2 T58 2.2 T60 2.2 T62 2.2 T64 2.2 T66 2.2 T68 2.2 T70 2.2 T72 2.2 T74 2.2 T76 2.2 T78 2.2 T80 2.2 T82 2.2 T84 2.2 T86 2.2 T88 2.2 T90 2.2 T92 2.2 T94 2.2 T96 2.2 T98 2.2 T100 2.2 T102 2.2 T104 2.2 T106 2.2 T108 2.2 T110 2.2 T112 2.2 T114 2.2 T116 2.2 T118 2.2 T120 2.2 T122 2.2 T124 2.2 T126 2.2 T128 2.2 T130 2.2 T132 2.2 T134 2.2 T136 2.2 T138 2.2 T140 2.2 T142 2.2 T144 2.2 T146 2.2 T148 2.2 T150 2.2 T152 2.2" fill="none" stroke="#e5484e" stroke-width="1"/></svg>
<span class="t code" style="left:102px;top:429.20px"><span class="gr">,</span>[Settlement_amount]</span>
<svg style="left:111.5px;top:442.2px" width="171" height="5" viewBox="0 0 171 5"><path d="M0 2.2 Q1 -0.9 2 2.2 T4 2.2 T6 2.2 T8 2.2 T10 2.2 T12 2.2 T14 2.2 T16 2.2 T18 2.2 T20 2.2 T22 2.2 T24 2.2 T26 2.2 T28 2.2 T30 2.2 T32 2.2 T34 2.2 T36 2.2 T38 2.2 T40 2.2 T42 2.2 T44 2.2 T46 2.2 T48 2.2 T50 2.2 T52 2.2 T54 2.2 T56 2.2 T58 2.2 T60 2.2 T62 2.2 T64 2.2 T66 2.2 T68 2.2 T70 2.2 T72 2.2 T74 2.2 T76 2.2 T78 2.2 T80 2.2 T82 2.2 T84 2.2 T86 2.2 T88 2.2 T90 2.2 T92 2.2 T94 2.2 T96 2.2 T98 2.2 T100 2.2 T102 2.2 T104 2.2 T106 2.2 T108 2.2 T110 2.2 T112 2.2 T114 2.2 T116 2.2 T118 2.2 T120 2.2 T122 2.2 T124 2.2 T126 2.2 T128 2.2 T130 2.2 T132 2.2 T134 2.2 T136 2.2 T138 2.2 T140 2.2 T142 2.2 T144 2.2 T146 2.2 T148 2.2 T150 2.2 T152 2.2 T154 2.2 T156 2.2 T158 2.2 T160 2.2 T162 2.2 T164 2.2 T166 2.2 T168 2.2 T170 2.2" fill="none" stroke="#e5484e" stroke-width="1"/></svg>
<span class="t code" style="left:102px;top:450.46px"><span class="gr">,</span>[Settlement_percentage]</span>
<svg style="left:111.5px;top:463.2px" width="207" height="5" viewBox="0 0 207 5"><path d="M0 2.2 Q1 -0.9 2 2.2 T4 2.2 T6 2.2 T8 2.2 T10 2.2 T12 2.2 T14 2.2 T16 2.2 T18 2.2 T20 2.2 T22 2.2 T24 2.2 T26 2.2 T28 2.2 T30 2.2 T32 2.2 T34 2.2 T36 2.2 T38 2.2 T40 2.2 T42 2.2 T44 2.2 T46 2.2 T48 2.2 T50 2.2 T52 2.2 T54 2.2 T56 2.2 T58 2.2 T60 2.2 T62 2.2 T64 2.2 T66 2.2 T68 2.2 T70 2.2 T72 2.2 T74 2.2 T76 2.2 T78 2.2 T80 2.2 T82 2.2 T84 2.2 T86 2.2 T88 2.2 T90 2.2 T92 2.2 T94 2.2 T96 2.2 T98 2.2 T100 2.2 T102 2.2 T104 2.2 T106 2.2 T108 2.2 T110 2.2 T112 2.2 T114 2.2 T116 2.2 T118 2.2 T120 2.2 T122 2.2 T124 2.2 T126 2.2 T128 2.2 T130 2.2 T132 2.2 T134 2.2 T136 2.2 T138 2.2 T140 2.2 T142 2.2 T144 2.2 T146 2.2 T148 2.2 T150 2.2 T152 2.2 T154 2.2 T156 2.2 T158 2.2 T160 2.2 T162 2.2 T164 2.2 T166 2.2 T168 2.2 T170 2.2 T172 2.2 T174 2.2 T176 2.2 T178 2.2 T180 2.2 T182 2.2 T184 2.2 T186 2.2 T188 2.2 T190 2.2 T192 2.2 T194 2.2 T196 2.2 T198 2.2 T200 2.2 T202 2.2 T204 2.2 T206 2.2" fill="none" stroke="#e5484e" stroke-width="1"/></svg>
<span class="t code" style="left:102px;top:471.72px"><span class="gr">,</span>[Settlement_term]</span>
<svg style="left:111.5px;top:485.2px" width="153" height="5" viewBox="0 0 153 5"><path d="M0 2.2 Q1 -0.9 2 2.2 T4 2.2 T6 2.2 T8 2.2 T10 2.2 T12 2.2 T14 2.2 T16 2.2 T18 2.2 T20 2.2 T22 2.2 T24 2.2 T26 2.2 T28 2.2 T30 2.2 T32 2.2 T34 2.2 T36 2.2 T38 2.2 T40 2.2 T42 2.2 T44 2.2 T46 2.2 T48 2.2 T50 2.2 T52 2.2 T54 2.2 T56 2.2 T58 2.2 T60 2.2 T62 2.2 T64 2.2 T66 2.2 T68 2.2 T70 2.2 T72 2.2 T74 2.2 T76 2.2 T78 2.2 T80 2.2 T82 2.2 T84 2.2 T86 2.2 T88 2.2 T90 2.2 T92 2.2 T94 2.2 T96 2.2 T98 2.2 T100 2.2 T102 2.2 T104 2.2 T106 2.2 T108 2.2 T110 2.2 T112 2.2 T114 2.2 T116 2.2 T118 2.2 T120 2.2 T122 2.2 T124 2.2 T126 2.2 T128 2.2 T130 2.2 T132 2.2 T134 2.2 T136 2.2 T138 2.2 T140 2.2 T142 2.2 T144 2.2 T146 2.2 T148 2.2 T150 2.2 T152 2.2" fill="none" stroke="#e5484e" stroke-width="1"/></svg>
<span class="t code" style="left:66px;top:492.98px"><span class="kw">FROM</span> [CDATA CONNECT CLOUD]<span class="gr">.</span>[ExcelOnline1]<span class="gr">.</span>[OneDrive]<span class="gr">.</span>[loan_details_loan_details_full]</span>
<svg style="left:111.5px;top:506.2px" width="720" height="5" viewBox="0 0 720 5"><path d="M0 2.2 Q1 -0.9 2 2.2 T4 2.2 T6 2.2 T8 2.2 T10 2.2 T12 2.2 T14 2.2 T16 2.2 T18 2.2 T20 2.2 T22 2.2 T24 2.2 T26 2.2 T28 2.2 T30 2.2 T32 2.2 T34 2.2 T36 2.2 T38 2.2 T40 2.2 T42 2.2 T44 2.2 T46 2.2 T48 2.2 T50 2.2 T52 2.2 T54 2.2 T56 2.2 T58 2.2 T60 2.2 T62 2.2 T64 2.2 T66 2.2 T68 2.2 T70 2.2 T72 2.2 T74 2.2 T76 2.2 T78 2.2 T80 2.2 T82 2.2 T84 2.2 T86 2.2 T88 2.2 T90 2.2 T92 2.2 T94 2.2 T96 2.2 T98 2.2 T100 2.2 T102 2.2 T104 2.2 T106 2.2 T108 2.2 T110 2.2 T112 2.2 T114 2.2 T116 2.2 T118 2.2 T120 2.2 T122 2.2 T124 2.2 T126 2.2 T128 2.2 T130 2.2 T132 2.2 T134 2.2 T136 2.2 T138 2.2 T140 2.2 T142 2.2 T144 2.2 T146 2.2 T148 2.2 T150 2.2 T152 2.2 T154 2.2 T156 2.2 T158 2.2 T160 2.2 T162 2.2 T164 2.2 T166 2.2 T168 2.2 T170 2.2 T172 2.2 T174 2.2 T176 2.2 T178 2.2 T180 2.2 T182 2.2 T184 2.2 T186 2.2 T188 2.2 T190 2.2 T192 2.2 T194 2.2 T196 2.2 T198 2.2 T200 2.2 T202 2.2 T204 2.2 T206 2.2 T208 2.2 T210 2.2 T212 2.2 T214 2.2 T216 2.2 T218 2.2 T220 2.2 T222 2.2 T224 2.2 T226 2.2 T228 2.2 T230 2.2 T232 2.2 T234 2.2 T236 2.2 T238 2.2 T240 2.2 T242 2.2 T244 2.2 T246 2.2 T248 2.2 T250 2.2 T252 2.2 T254 2.2 T256 2.2 T258 2.2 T260 2.2 T262 2.2 T264 2.2 T266 2.2 T268 2.2 T270 2.2 T272 2.2 T274 2.2 T276 2.2 T278 2.2 T280 2.2 T282 2.2 T284 2.2 T286 2.2 T288 2.2 T290 2.2 T292 2.2 T294 2.2 T296 2.2 T298 2.2 T300 2.2 T302 2.2 T304 2.2 T306 2.2 T308 2.2 T310 2.2 T312 2.2 T314 2.2 T316 2.2 T318 2.2 T320 2.2 T322 2.2 T324 2.2 T326 2.2 T328 2.2 T330 2.2 T332 2.2 T334 2.2 T336 2.2 T338 2.2 T340 2.2 T342 2.2 T344 2.2 T346 2.2 T348 2.2 T350 2.2 T352 2.2 T354 2.2 T356 2.2 T358 2.2 T360 2.2 T362 2.2 T364 2.2 T366 2.2 T368 2.2 T370 2.2 T372 2.2 T374 2.2 T376 2.2 T378 2.2 T380 2.2 T382 2.2 T384 2.2 T386 2.2 T388 2.2 T390 2.2 T392 2.2 T394 2.2 T396 2.2 T398 2.2 T400 2.2 T402 2.2 T404 2.2 T406 2.2 T408 2.2 T410 2.2 T412 2.2 T414 2.2 T416 2.2 T418 2.2 T420 2.2 T422 2.2 T424 2.2 T426 2.2 T428 2.2 T430 2.2 T432 2.2 T434 2.2 T436 2.2 T438 2.2 T440 2.2 T442 2.2 T444 2.2 T446 2.2 T448 2.2 T450 2.2 T452 2.2 T454 2.2 T456 2.2 T458 2.2 T460 2.2 T462 2.2 T464 2.2 T466 2.2 T468 2.2 T470 2.2 T472 2.2 T474 2.2 T476 2.2 T478 2.2 T480 2.2 T482 2.2 T484 2.2 T486 2.2 T488 2.2 T490 2.2 T492 2.2 T494 2.2 T496 2.2 T498 2.2 T500 2.2 T502 2.2 T504 2.2 T506 2.2 T508 2.2 T510 2.2 T512 2.2 T514 2.2 T516 2.2 T518 2.2 T520 2.2 T522 2.2 T524 2.2 T526 2.2 T528 2.2 T530 2.2 T532 2.2 T534 2.2 T536 2.2 T538 2.2 T540 2.2 T542 2.2 T544 2.2 T546 2.2 T548 2.2 T550 2.2 T552 2.2 T554 2.2 T556 2.2 T558 2.2 T560 2.2 T562 2.2 T564 2.2 T566 2.2 T568 2.2 T570 2.2 T572 2.2 T574 2.2 T576 2.2 T578 2.2 T580 2.2 T582 2.2 T584 2.2 T586 2.2 T588 2.2 T590 2.2 T592 2.2 T594 2.2 T596 2.2 T598 2.2 T600 2.2 T602 2.2 T604 2.2 T606 2.2 T608 2.2 T610 2.2 T612 2.2 T614 2.2 T616 2.2 T618 2.2 T620 2.2 T622 2.2 T624 2.2 T626 2.2 T628 2.2 T630 2.2 T632 2.2 T634 2.2 T636 2.2 T638 2.2 T640 2.2 T642 2.2 T644 2.2 T646 2.2 T648 2.2 T650 2.2 T652 2.2 T654 2.2 T656 2.2 T658 2.2 T660 2.2 T662 2.2 T664 2.2 T666 2.2 T668 2.2 T670 2.2 T672 2.2 T674 2.2 T676 2.2 T678 2.2 T680 2.2 T682 2.2 T684 2.2 T686 2.2 T688 2.2 T690 2.2 T692 2.2 T694 2.2 T696 2.2 T698 2.2 T700 2.2 T702 2.2 T704 2.2 T706 2.2 T708 2.2 T710 2.2 T712 2.2 T714 2.2 T716 2.2 T718 2.2 T720 2.2" fill="none" stroke="#e5484e" stroke-width="1"/></svg>
<span class="t code kw" style="left:48px;top:514.24px">GO</span>
<div class="abs" style="left:221px;top:192px;width:1px;height:19px;background:#000"></div>
</div>
<div id="res">
<div class="abs" style="left:0;top:0;width:1062px;height:21px;background:#e6e7e8"></div>
<div class="abs" style="left:0;top:21px;width:1062px;height:1px;background:#ebecee"></div>
<div class="abs" style="left:1px;top:1px;width:75px;height:20px;background:#fff;border:1px solid #d0d3da"></div>
<span class="t" style="left:4px;top:4.500px;font-size:14.5px;color:#1e1e1e;letter-spacing:0.017px">100 %</span>
<svg style="left:64px;top:9px" width="8" height="5"><path d="M0 0h8l-4 4.5z" fill="#1e1e1e"/></svg>
<svg style="left:83px;top:6px" width="7" height="10"><path d="M6.5 0v10L0 5z" fill="#c9cbd0"/></svg>
<div class="abs" style="left:0;top:50px;width:1062px;height:1px;background:#d9d9d9"></div>
<div class="abs" style="left:82px;top:27px;width:96px;height:23px;background:#f0f0f0;border:1px solid #d9d9d9;border-bottom:none"></div>
<div class="abs" style="left:1px;top:25px;width:82px;height:26px;background:#fff;border:1px solid #d9d9d9;border-bottom:none"></div>
<svg style="left:11px;top:30px" width="13" height="12" viewBox="0 0 13 12" ><rect width="13" height="12" fill="#3c3c3c"/><rect x="1.2" y="3.5" width="2.700" height="1.700" fill="#fff"/><rect x="5.2" y="3.5" width="2.700" height="1.700" fill="#fff"/><rect x="9.2" y="3.5" width="2.700" height="1.700" fill="#fff"/><rect x="1.2" y="6.3" width="2.700" height="1.700" fill="#fff"/><rect x="5.2" y="6.3" width="2.700" height="1.700" fill="#fff"/><rect x="9.2" y="6.3" width="2.700" height="1.700" fill="#fff"/><rect x="1.2" y="9.1" width="2.700" height="1.700" fill="#fff"/><rect x="5.2" y="9.1" width="2.700" height="1.700" fill="#fff"/><rect x="9.2" y="9.1" width="2.700" height="1.700" fill="#fff"/></svg><svg style="left:89px;top:31px" width="15" height="14" viewBox="0 0 15 14" ><rect x="6" y="0" width="8" height="10.500" fill="#3c3c3c"/><path d="M7.500 2h5M7.500 4h5" stroke="#f0f0f0" stroke-width="0.900"/><rect x="11.500" y="7.500" width="1.500" height="1.500" fill="#f0f0f0"/><rect x="-0.300" y="3.700" width="8.200" height="11" fill="#f0f0f0"/><path d="M0.600 4.600h4.300l2.200 2.200v6.600H0.600z" fill="#fafafa" stroke="#3c3c3c" stroke-width="1.100"/><path d="M2 8.300h3.600M2 10.100h3.600M2 11.900h3.600" stroke="#3c3c3c" stroke-width="0.700"/></svg>
<span class="t" style="left:30.5px;top:29.5px;font-size:13px;color:#000;letter-spacing:0.283px">Results</span>
<span class="t" style="left:109.3px;top:31.5px;font-size:13px;color:#000;letter-spacing:0.7px">Messages</span>
<div class="abs" style="left:5px;top:50px;width:1057px;height:283px;background:#fff;border:1px solid #a0a0a0;border-right:none"></div>
<div class="hl" style="left:6px;top:70px;width:1054px"></div>
<div class="hl" style="left:6px;top:90px;width:1054px"></div>
<div class="hl" style="left:6px;top:110px;width:1054px"></div>
<div class="hl" style="left:6px;top:130px;width:1054px"></div>
<div class="hl" style="left:6px;top:150px;width:1054px"></div>
<div class="hl" style="left:6px;top:170px;width:1054px"></div>
<div class="hl" style="left:6px;top:190px;width:1054px"></div>
<div class="hl" style="left:6px;top:210px;width:1054px"></div>
<div class="hl" style="left:6px;top:230px;width:1054px"></div>
<div class="hl" style="left:6px;top:250px;width:1054px"></div>
<div class="hl" style="left:6px;top:270px;width:1054px"></div>
<div class="hl" style="left:6px;top:290px;width:1054px"></div>
<div class="hl" style="left:6px;top:310px;width:1054px"></div>
<div class="vl" style="left:41px;top:51px;height:259px"></div>
<div class="vl" style="left:72px;top:51px;height:259px"></div>
<div class="vl" style="left:165px;top:51px;height:259px"></div>
<div class="vl" style="left:238px;top:51px;height:259px"></div>
<div class="vl" style="left:334px;top:51px;height:259px"></div>
<div class="vl" style="left:422px;top:51px;height:259px"></div>
<div class="vl" style="left:527px;top:51px;height:259px"></div>
<div class="vl" style="left:632px;top:51px;height:259px"></div>
<div class="vl" style="left:719px;top:51px;height:259px"></div>
<div class="vl" style="left:837px;top:51px;height:259px"></div>
<div class="vl" style="left:914px;top:51px;height:259px"></div>
<div class="vl" style="left:1060px;top:51px;height:259px"></div>
<div class="abs" style="left:42px;top:71px;width:31px;height:20px;background:#eeeff1;border:1px dotted #000"></div>
<span class="t g" style="left:46.69999999999999px;top:56.799999999999955px;letter-spacing:0.504px">Id</span>
<span class="t g" style="left:77.70000000000005px;top:56.799999999999955px;letter-spacing:0.025px">Application_id</span>
<span class="t g" style="left:170.70000000000005px;top:56.799999999999955px;letter-spacing:-0.078px">Out_prncp</span>
<span class="t g" style="left:243.70000000000005px;top:56.799999999999955px;letter-spacing:-0.127px">Out_prncp_inv</span>
<span class="t g" style="left:339.70000000000005px;top:56.799999999999955px;letter-spacing:0.037px">Total_pymnt</span>
<span class="t g" style="left:427.70000000000005px;top:56.799999999999955px;letter-spacing:0.011px">Total_pymnt_inv</span>
<span class="t g" style="left:532.7px;top:56.799999999999955px;letter-spacing:0.057px">Total_rec_prncp</span>
<span class="t g" style="left:637.7px;top:56.799999999999955px;letter-spacing:0.059px">Total_rec_int</span>
<span class="t g" style="left:724.7px;top:56.799999999999955px;letter-spacing:0.036px">Total_rec_late_fee</span>
<span class="t g" style="left:842.7px;top:56.799999999999955px;letter-spacing:-0.093px">Recoveries</span>
<span class="t g" style="left:919.7px;top:56.799999999999955px;letter-spacing:-0.122px">Collection_recovery_fee</span>
<span class="t g" style="left:12px;top:76.50000000000004px;letter-spacing:0.15px">1</span>
<span class="t g" style="left:48.69999999999999px;top:75.20000000000005px;letter-spacing:0.15px">2</span>
<span class="t g" style="left:80.0px;top:75.20000000000005px;letter-spacing:0.15px">1002</span>
<span class="t g" style="left:173.0px;top:75.20000000000005px;letter-spacing:0.15px">7345.55</span>
<span class="t g" style="left:246.0px;top:75.20000000000005px;letter-spacing:0.15px">7345.55</span>
<span class="t g" style="left:342.0px;top:75.20000000000005px;letter-spacing:0.15px">5629.2</span>
<span class="t g" style="left:430.0px;top:75.20000000000005px;letter-spacing:0.15px">5629.2</span>
<span class="t g" style="left:535.0px;top:75.20000000000005px;letter-spacing:0.15px">4654.45</span>
<span class="t g" style="left:640.0px;top:75.20000000000005px;letter-spacing:0.15px">974.75</span>
<span class="t g" style="left:727.0px;top:75.20000000000005px;letter-spacing:0.15px">0</span>
<span class="t g" style="left:845.0px;top:75.20000000000005px;letter-spacing:0.15px">0</span>
<span class="t g" style="left:922.0px;top:75.20000000000005px;letter-spacing:0.15px">0</span>
<span class="t g" style="left:12px;top:96.50000000000004px;letter-spacing:0.15px">2</span>
<span class="t g" style="left:48.69999999999999px;top:95.20000000000005px;letter-spacing:0.15px">3</span>
<span class="t g" style="left:80.0px;top:95.20000000000005px;letter-spacing:0.15px">1003</span>
<span class="t g" style="left:173.0px;top:95.20000000000005px;letter-spacing:0.15px">11185.56</span>
<span class="t g" style="left:246.0px;top:95.20000000000005px;letter-spacing:0.15px">11185.56</span>
<span class="t g" style="left:342.0px;top:95.20000000000005px;letter-spacing:0.15px">12673.88</span>
<span class="t g" style="left:430.0px;top:95.20000000000005px;letter-spacing:0.15px">12673.88</span>
<span class="t g" style="left:535.0px;top:95.20000000000005px;letter-spacing:0.15px">8814.44</span>
<span class="t g" style="left:640.0px;top:95.20000000000005px;letter-spacing:0.15px">3859.44</span>
<span class="t g" style="left:727.0px;top:95.20000000000005px;letter-spacing:0.15px">0</span>
<span class="t g" style="left:845.0px;top:95.20000000000005px;letter-spacing:0.15px">0</span>
<span class="t g" style="left:922.0px;top:95.20000000000005px;letter-spacing:0.15px">0</span>
<span class="t g" style="left:12px;top:116.50000000000004px;letter-spacing:0.15px">3</span>
<span class="t g" style="left:48.69999999999999px;top:115.20000000000005px;letter-spacing:0.15px">4</span>
<span class="t g" style="left:80.0px;top:115.20000000000005px;letter-spacing:0.15px">1004</span>
<span class="t g" style="left:173.0px;top:115.20000000000005px;letter-spacing:0.15px">7053.66</span>
<span class="t g" style="left:246.0px;top:115.20000000000005px;letter-spacing:0.15px">7053.66</span>
<span class="t g" style="left:342.0px;top:115.20000000000005px;letter-spacing:0.15px">7693.24</span>
<span class="t g" style="left:430.0px;top:115.20000000000005px;letter-spacing:0.15px">7693.24</span>
<span class="t g" style="left:535.0px;top:115.20000000000005px;letter-spacing:0.15px">5946.34</span>
<span class="t g" style="left:640.0px;top:115.20000000000005px;letter-spacing:0.15px">1746.9</span>
<span class="t g" style="left:727.0px;top:115.20000000000005px;letter-spacing:0.15px">0</span>
<span class="t g" style="left:845.0px;top:115.20000000000005px;letter-spacing:0.15px">0</span>
<span class="t g" style="left:922.0px;top:115.20000000000005px;letter-spacing:0.15px">0</span>
<span class="t g" style="left:12px;top:136.50000000000006px;letter-spacing:0.15px">4</span>
<span class="t g" style="left:48.69999999999999px;top:135.20000000000005px;letter-spacing:0.15px">5</span>
<span class="t g" style="left:80.0px;top:135.20000000000005px;letter-spacing:0.15px">1005</span>
<span class="t g" style="left:173.0px;top:135.20000000000005px;letter-spacing:0.15px">0</span>
<span class="t g" style="left:246.0px;top:135.20000000000005px;letter-spacing:0.15px">0</span>
<span class="t g" style="left:342.0px;top:135.20000000000005px;letter-spacing:0.15px">4804.1</span>
<span class="t g" style="left:430.0px;top:135.20000000000005px;letter-spacing:0.15px">4804.1</span>
<span class="t g" style="left:535.0px;top:135.20000000000005px;letter-spacing:0.15px">1460.6</span>
<span class="t g" style="left:640.0px;top:135.20000000000005px;letter-spacing:0.15px">1577.95</span>
<span class="t g" style="left:727.0px;top:135.20000000000005px;letter-spacing:0.15px">0</span>
<span class="t g" style="left:845.0px;top:135.20000000000005px;letter-spacing:0.15px">1765.55</span>
<span class="t g" style="left:922.0px;top:135.20000000000005px;letter-spacing:0.15px">317.799</span>
<span class="t g" style="left:12px;top:156.50000000000006px;letter-spacing:0.15px">5</span>
<span class="t g" style="left:48.69999999999999px;top:155.20000000000005px;letter-spacing:0.15px">6</span>
<span class="t g" style="left:80.0px;top:155.20000000000005px;letter-spacing:0.15px">1006</span>
<span class="t g" style="left:173.0px;top:155.20000000000005px;letter-spacing:0.15px">6839.33</span>
<span class="t g" style="left:246.0px;top:155.20000000000005px;letter-spacing:0.15px">6839.33</span>
<span class="t g" style="left:342.0px;top:155.20000000000005px;letter-spacing:0.15px">7214.2</span>
<span class="t g" style="left:430.0px;top:155.20000000000005px;letter-spacing:0.15px">7214.2</span>
<span class="t g" style="left:535.0px;top:155.20000000000005px;letter-spacing:0.15px">6160.67</span>
<span class="t g" style="left:640.0px;top:155.20000000000005px;letter-spacing:0.15px">1053.53</span>
<span class="t g" style="left:727.0px;top:155.20000000000005px;letter-spacing:0.15px">0</span>
<span class="t g" style="left:845.0px;top:155.20000000000005px;letter-spacing:0.15px">0</span>
<span class="t g" style="left:922.0px;top:155.20000000000005px;letter-spacing:0.15px">0</span>
<span class="t g" style="left:12px;top:176.50000000000006px;letter-spacing:0.15px">6</span>
<span class="t g" style="left:48.69999999999999px;top:175.20000000000005px;letter-spacing:0.15px">7</span>
<span class="t g" style="left:80.0px;top:175.20000000000005px;letter-spacing:0.15px">1007</span>
<span class="t g" style="left:173.0px;top:175.20000000000005px;letter-spacing:0.15px">20231.6</span>
<span class="t g" style="left:246.0px;top:175.20000000000005px;letter-spacing:0.15px">20231.6</span>
<span class="t g" style="left:342.0px;top:175.20000000000005px;letter-spacing:0.15px">11332.33</span>
<span class="t g" style="left:430.0px;top:175.20000000000005px;letter-spacing:0.15px">11332.33</span>
<span class="t g" style="left:535.0px;top:175.20000000000005px;letter-spacing:0.15px">5768.4</span>
<span class="t g" style="left:640.0px;top:175.20000000000005px;letter-spacing:0.15px">5563.93</span>
<span class="t g" style="left:727.0px;top:175.20000000000005px;letter-spacing:0.15px">0</span>
<span class="t g" style="left:845.0px;top:175.20000000000005px;letter-spacing:0.15px">0</span>
<span class="t g" style="left:922.0px;top:175.20000000000005px;letter-spacing:0.15px">0</span>
<span class="t g" style="left:12px;top:196.50000000000006px;letter-spacing:0.15px">7</span>
<span class="t g" style="left:48.69999999999999px;top:195.20000000000005px;letter-spacing:0.15px">8</span>
<span class="t g" style="left:80.0px;top:195.20000000000005px;letter-spacing:0.15px">1008</span>
<span class="t g" style="left:173.0px;top:195.20000000000005px;letter-spacing:0.15px">2628.54</span>
<span class="t g" style="left:246.0px;top:195.20000000000005px;letter-spacing:0.15px">2628.54</span>
<span class="t g" style="left:342.0px;top:195.20000000000005px;letter-spacing:0.15px">2965.61</span>
<span class="t g" style="left:430.0px;top:195.20000000000005px;letter-spacing:0.15px">2965.61</span>
<span class="t g" style="left:535.0px;top:195.20000000000005px;letter-spacing:0.15px">2071.46</span>
<span class="t g" style="left:640.0px;top:195.20000000000005px;letter-spacing:0.15px">894.15</span>
<span class="t g" style="left:727.0px;top:195.20000000000005px;letter-spacing:0.15px">0</span>
<span class="t g" style="left:845.0px;top:195.20000000000005px;letter-spacing:0.15px">0</span>
<span class="t g" style="left:922.0px;top:195.20000000000005px;letter-spacing:0.15px">0</span>
<span class="t g" style="left:12px;top:216.50000000000006px;letter-spacing:0.15px">8</span>
<span class="t g" style="left:48.69999999999999px;top:215.20000000000005px;letter-spacing:0.15px">9</span>
<span class="t g" style="left:80.0px;top:215.20000000000005px;letter-spacing:0.15px">1009</span>
<span class="t g" style="left:173.0px;top:215.20000000000005px;letter-spacing:0.15px">5298.23</span>
<span class="t g" style="left:246.0px;top:215.20000000000005px;letter-spacing:0.15px">5298.23</span>
<span class="t g" style="left:342.0px;top:215.20000000000005px;letter-spacing:0.15px">5630.88</span>
<span class="t g" style="left:430.0px;top:215.20000000000005px;letter-spacing:0.15px">5630.88</span>
<span class="t g" style="left:535.0px;top:215.20000000000005px;letter-spacing:0.15px">4701.77</span>
<span class="t g" style="left:640.0px;top:215.20000000000005px;letter-spacing:0.15px">929.11</span>
<span class="t g" style="left:727.0px;top:215.20000000000005px;letter-spacing:0.15px">0</span>
<span class="t g" style="left:845.0px;top:215.20000000000005px;letter-spacing:0.15px">0</span>
<span class="t g" style="left:922.0px;top:215.20000000000005px;letter-spacing:0.15px">0</span>
<span class="t g" style="left:12px;top:236.50000000000006px;letter-spacing:0.15px">9</span>
<span class="t g" style="left:48.69999999999999px;top:235.20000000000005px;letter-spacing:0.15px">10</span>
<span class="t g" style="left:80.0px;top:235.20000000000005px;letter-spacing:0.15px">1010</span>
<span class="t g" style="left:173.0px;top:235.20000000000005px;letter-spacing:0.15px">0</span>
<span class="t g" style="left:246.0px;top:235.20000000000005px;letter-spacing:0.15px">0</span>
<span class="t g" style="left:342.0px;top:235.20000000000005px;letter-spacing:0.15px">3765.098751</span>
<span class="t g" style="left:430.0px;top:235.20000000000005px;letter-spacing:0.15px">3765.1</span>
<span class="t g" style="left:535.0px;top:235.20000000000005px;letter-spacing:0.15px">3600</span>
<span class="t g" style="left:640.0px;top:235.20000000000005px;letter-spacing:0.15px">165.1</span>
<span class="t g" style="left:727.0px;top:235.20000000000005px;letter-spacing:0.15px">0</span>
<span class="t g" style="left:845.0px;top:235.20000000000005px;letter-spacing:0.15px">0</span>
<span class="t g" style="left:922.0px;top:235.20000000000005px;letter-spacing:0.15px">0</span>
<span class="t g" style="left:12px;top:256.50000000000006px;letter-spacing:0.15px">10</span>
<span class="t g" style="left:48.69999999999999px;top:255.20000000000005px;letter-spacing:0.15px">11</span>
<span class="t g" style="left:80.0px;top:255.20000000000005px;letter-spacing:0.15px">1011</span>
<span class="t g" style="left:173.0px;top:255.20000000000005px;letter-spacing:0.15px">3109.14</span>
<span class="t g" style="left:246.0px;top:255.20000000000005px;letter-spacing:0.15px">3109.14</span>
<span class="t g" style="left:342.0px;top:255.20000000000005px;letter-spacing:0.15px">3375.02</span>
<span class="t g" style="left:430.0px;top:255.20000000000005px;letter-spacing:0.15px">3375.02</span>
<span class="t g" style="left:535.0px;top:255.20000000000005px;letter-spacing:0.15px">2890.86</span>
<span class="t g" style="left:640.0px;top:255.20000000000005px;letter-spacing:0.15px">484.16</span>
<span class="t g" style="left:727.0px;top:255.20000000000005px;letter-spacing:0.15px">0</span>
<span class="t g" style="left:845.0px;top:255.20000000000005px;letter-spacing:0.15px">0</span>
<span class="t g" style="left:922.0px;top:255.20000000000005px;letter-spacing:0.15px">0</span>
<span class="t g" style="left:12px;top:276.50000000000006px;letter-spacing:0.15px">11</span>
<span class="t g" style="left:48.69999999999999px;top:275.20000000000005px;letter-spacing:0.15px">12</span>
<span class="t g" style="left:80.0px;top:275.20000000000005px;letter-spacing:0.15px">1012</span>
<span class="t g" style="left:173.0px;top:275.20000000000005px;letter-spacing:0.15px">20083.01</span>
<span class="t g" style="left:246.0px;top:275.20000000000005px;letter-spacing:0.15px">20083.01</span>
<span class="t g" style="left:342.0px;top:275.20000000000005px;letter-spacing:0.15px">23332.16</span>
<span class="t g" style="left:430.0px;top:275.20000000000005px;letter-spacing:0.15px">23332.16</span>
<span class="t g" style="left:535.0px;top:275.20000000000005px;letter-spacing:0.15px">14916.99</span>
<span class="t g" style="left:640.0px;top:275.20000000000005px;letter-spacing:0.15px">8415.17</span>
<span class="t g" style="left:727.0px;top:275.20000000000005px;letter-spacing:0.15px">0</span>
<span class="t g" style="left:845.0px;top:275.20000000000005px;letter-spacing:0.15px">0</span>
<span class="t g" style="left:922.0px;top:275.20000000000005px;letter-spacing:0.15px">0</span>
<span class="t g" style="left:12px;top:296.50000000000006px;letter-spacing:0.15px">12</span>
<span class="t g" style="left:48.69999999999999px;top:295.20000000000005px;letter-spacing:0.15px">13</span>
<span class="t g" style="left:80.0px;top:295.20000000000005px;letter-spacing:0.15px">1013</span>
<span class="t g" style="left:173.0px;top:295.20000000000005px;letter-spacing:0.15px">7762.8</span>
<span class="t g" style="left:246.0px;top:295.20000000000005px;letter-spacing:0.15px">7762.8</span>
<span class="t g" style="left:342.0px;top:295.20000000000005px;letter-spacing:0.15px">8406.68</span>
<span class="t g" style="left:430.0px;top:295.20000000000005px;letter-spacing:0.15px">8406.68</span>
<span class="t g" style="left:535.0px;top:295.20000000000005px;letter-spacing:0.15px">6637.2</span>
<span class="t g" style="left:640.0px;top:295.20000000000005px;letter-spacing:0.15px">1769.48</span>
<span class="t g" style="left:727.0px;top:295.20000000000005px;letter-spacing:0.15px">0</span>
<span class="t g" style="left:845.0px;top:295.20000000000005px;letter-spacing:0.15px">0</span>
<span class="t g" style="left:922.0px;top:295.20000000000005px;letter-spacing:0.15px">0</span>
<div class="abs" style="left:6px;top:312px;width:1056px;height:19px;background:#f0f0f0"></div>
<div class="abs" style="left:27px;top:312px;width:710px;height:19px;background:#cdcdcd"></div>
<svg style="left:12px;top:317px" width="8" height="10"><path d="M6.5 0.5L1.5 5l5 4.5" fill="none" stroke="#505050" stroke-width="1.8"/></svg>
</div>
</body></html>
